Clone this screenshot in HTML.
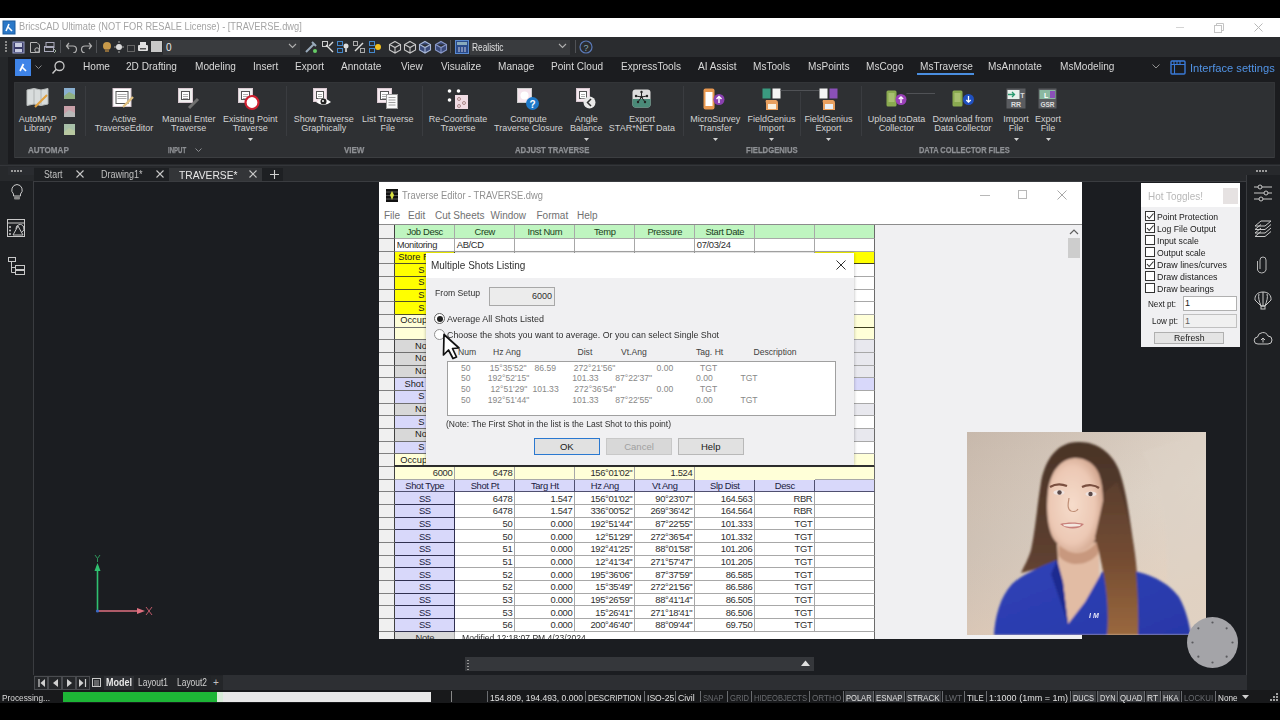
<!DOCTYPE html><html><head><meta charset="utf-8"><style>
*{margin:0;padding:0;box-sizing:border-box}
html,body{width:1280px;height:720px;overflow:hidden;background:#000;font-family:"Liberation Sans",sans-serif}
.t{position:absolute;white-space:nowrap;line-height:1}
.a{position:absolute}
</style></head><body>
<div class="a" style="left:0px;top:0px;width:1280px;height:18px;background:#000"></div>
<div class="a" style="left:0px;top:18px;width:1280px;height:19px;background:#fff"></div>
<svg class="a" style="left:2px;top:20px;" width="14" height="15" viewBox="0 0 14 15"><rect x="0.5" y="0.5" width="13" height="14" fill="#1d5d9e"/><rect x="1.5" y="1.5" width="11" height="12" fill="#2a78c8"/><path d="M4,11 L7,4 M6,7 L10,11" stroke="#fff" stroke-width="1.6" fill="none"/></svg>
<div class="t" style="left:18.5px;top:21.5px;font-size:10.4px;transform:scaleX(0.8914);transform-origin:0 0;color:#a4a4a4">BricsCAD Ultimate (NOT FOR RESALE License) - [TRAVERSE.dwg]</div>
<div class="a" style="left:1176px;top:26.5px;width:8px;height:1px;background:#d4d4d4"></div>
<svg class="a" style="left:1214px;top:23px;" width="11" height="10" viewBox="0 0 11 10"><rect x="0.5" y="2.5" width="7" height="7" fill="none" stroke="#c4c4c4"/><path d="M2.5,2.5 V0.5 H9.5 V7.5 H7.5" fill="none" stroke="#c4c4c4"/></svg>
<svg class="a" style="left:1254px;top:22.5px;" width="9" height="9" viewBox="0 0 9 9"><path d="M0.5,0.5 L8.5,8.5 M8.5,0.5 L0.5,8.5" stroke="#b8b8b8" stroke-width="1"/></svg>
<div class="a" style="left:0px;top:37px;width:1280px;height:20px;background:#2a2c2f"></div>
<div class="a" style="left:5px;top:41px;width:2px;height:2px;background:#8a8a8a"></div>
<div class="a" style="left:5px;top:44px;width:2px;height:2px;background:#8a8a8a"></div>
<div class="a" style="left:5px;top:47px;width:2px;height:2px;background:#8a8a8a"></div>
<div class="a" style="left:5px;top:50px;width:2px;height:2px;background:#8a8a8a"></div>
<svg class="a" style="left:12px;top:41px;" width="13" height="13" viewBox="0 0 13 13"><rect x="1" y="1" width="11" height="11" fill="#3a3c6a" stroke="#9aa0c8" stroke-width="1"/><rect x="3" y="2" width="7" height="4" fill="#c8cce0"/><rect x="3" y="8" width="7" height="3" fill="#c8cce0"/></svg>
<svg class="a" style="left:29px;top:41px;" width="13" height="13" viewBox="0 0 13 13"><path d="M1.5,1.5 H8 L10.5,4 V11.5 H1.5Z" fill="none" stroke="#b8b8b8" stroke-width="1"/><circle cx="8" cy="9" r="2.2" fill="none" stroke="#b8b8b8"/></svg>
<svg class="a" style="left:43px;top:41px;" width="14" height="13" viewBox="0 0 14 13"><rect x="3" y="1.5" width="8" height="5" fill="none" stroke="#aab" stroke-width="1"/><rect x="1.5" y="5.5" width="9" height="5" fill="none" stroke="#aab"/><path d="M11,8 L13,10 L11,12" stroke="#9a9" fill="none"/></svg>
<div class="a" style="left:60px;top:40px;width:1px;height:13px;background:#505256"></div>
<svg class="a" style="left:65px;top:41px;" width="13" height="12" viewBox="0 0 13 12"><path d="M4,2 L1.5,5 L4,8 M1.5,5 H8 A3.5,3.5 0 0 1 8,12" fill="none" stroke="#b0b0b0" stroke-width="1.2"/></svg>
<svg class="a" style="left:80px;top:41px;" width="13" height="12" viewBox="0 0 13 12"><path d="M9,2 L11.5,5 L9,8 M11.5,5 H5 A3.5,3.5 0 0 0 5,12" fill="none" stroke="#b0b0b0" stroke-width="1.2"/></svg>
<div class="a" style="left:96px;top:40px;width:1px;height:13px;background:#505256"></div>
<svg class="a" style="left:102px;top:40px;" width="10" height="14" viewBox="0 0 10 14"><circle cx="5" cy="6" r="4" fill="#c89a4a"/><rect x="3" y="9" width="4" height="3" fill="#8a6a3a"/></svg>
<svg class="a" style="left:114px;top:40px;" width="10" height="14" viewBox="0 0 10 14"><circle cx="5" cy="7" r="3" fill="#ddd"/><path d="M5,1 V3 M5,11 V13 M0,7 H2 M8,7 H10" stroke="#aaa"/></svg>
<svg class="a" style="left:127px;top:42px;" width="8" height="10" viewBox="0 0 8 10"><rect x="0.5" y="3.5" width="7" height="6" fill="none" stroke="#666"/></svg>
<svg class="a" style="left:137px;top:41px;" width="12" height="12" viewBox="0 0 12 12"><rect x="1" y="4" width="10" height="6" rx="1" fill="#e0e0e0"/><rect x="3" y="1" width="6" height="3" fill="#e0e0e0"/><rect x="3" y="7" width="6" height="1.5" fill="#555"/></svg>
<div class="a" style="left:151.3px;top:41.3px;width:10.7px;height:10.7px;background:#c8c8c8"></div>
<div class="a" style="left:163px;top:39.5px;width:137px;height:15px;background:#393b3e"></div>
<div class="t" style="left:166px;top:42.8px;font-size:10px;color:#e8e8e8">0</div>
<svg class="a" style="left:288px;top:43px;" width="9" height="6" viewBox="0 0 9 6"><path d="M1,1 L4.5,4.5 L8,1" fill="none" stroke="#b0b0b0" stroke-width="1.1"/></svg>
<svg class="a" style="left:304px;top:40px;" width="14" height="14" viewBox="0 0 14 14"><path d="M2,12 L10,4 M8,2 L12,6" stroke="#9ab" stroke-width="2"/><circle cx="11" cy="11" r="2" fill="#6c6"/></svg>
<svg class="a" style="left:321px;top:40px;" width="14" height="14" viewBox="0 0 14 14"><rect x="1.5" y="1.5" width="5" height="5" fill="none" stroke="#ccc"/><path d="M5,5 L12,12 M8,6 L12,2" stroke="#ddd" stroke-width="1.4"/></svg>
<svg class="a" style="left:336px;top:40px;" width="14" height="14" viewBox="0 0 14 14"><rect x="1.5" y="1.5" width="5" height="4" fill="none" stroke="#48c"/><rect x="1.5" y="8.5" width="5" height="4" fill="none" stroke="#48c"/><circle cx="10" cy="6" r="2.5" fill="#ddd"/><rect x="9" y="8" width="2" height="4" fill="#bbb"/></svg>
<svg class="a" style="left:352px;top:40px;" width="14" height="14" viewBox="0 0 14 14"><rect x="1.5" y="1.5" width="4" height="4" fill="none" stroke="#aaa"/><rect x="8.5" y="8.5" width="4" height="4" fill="none" stroke="#aaa"/><path d="M3,11 L11,3" stroke="#ddd" stroke-width="1.4"/></svg>
<svg class="a" style="left:368px;top:40px;" width="14" height="14" viewBox="0 0 14 14"><rect x="1.5" y="1.5" width="5" height="4" fill="none" stroke="#48c"/><rect x="1.5" y="8.5" width="5" height="4" fill="none" stroke="#48c"/><circle cx="10" cy="7" r="3" fill="#f0c020"/></svg>
<svg class="a" style="left:388px;top:40px;" width="14" height="14" viewBox="0 0 14 14"><path d="M7,1.5 L12.5,4.5 V10 L7,13 L1.5,10 V4.5Z M1.5,4.5 L7,7.5 L12.5,4.5 M7,7.5 V13" fill="none" stroke="#c8c8c8" stroke-width="1.1"/></svg>
<svg class="a" style="left:403px;top:40px;" width="14" height="14" viewBox="0 0 14 14"><path d="M7,1.5 L12.5,4.5 V10 L7,13 L1.5,10 V4.5Z M1.5,4.5 L7,7.5 L12.5,4.5 M7,7.5 V13" fill="none" stroke="#c8c8c8" stroke-width="1.1"/></svg>
<svg class="a" style="left:418px;top:40px;" width="14" height="14" viewBox="0 0 14 14"><path d="M7,1.5 L12.5,4.5 V10 L7,13 L1.5,10 V4.5Z M1.5,4.5 L7,7.5 L12.5,4.5 M7,7.5 V13" fill="#3a4a7a" stroke="#a8b8d8" stroke-width="1.1"/></svg>
<svg class="a" style="left:434px;top:40px;" width="14" height="14" viewBox="0 0 14 14"><path d="M7,1.5 L12.5,4.5 V10 L7,13 L1.5,10 V4.5Z M1.5,4.5 L7,7.5 L12.5,4.5 M7,7.5 V13" fill="#3a4a7a" stroke="#8898c8" stroke-width="1.1"/></svg>
<div class="a" style="left:450px;top:40px;width:1px;height:13px;background:#505256"></div>
<svg class="a" style="left:455px;top:40px;" width="14" height="14" viewBox="0 0 14 14"><rect x="0.5" y="0.5" width="13" height="13" fill="#2a4a8a" stroke="#5a8ad0"/><rect x="2" y="2" width="10" height="3" fill="#8ab"/><path d="M4,7 V12 M7,7 V12 M10,7 V12" stroke="#ccd"/></svg>
<div class="a" style="left:470px;top:39.5px;width:100px;height:15px;background:#393b3e"></div>
<div class="t" style="left:471.5px;top:41.5px;font-size:10.5px;transform:scaleX(0.7939);transform-origin:0 0;color:#e0e0e0">Realistic</div>
<svg class="a" style="left:558px;top:43px;" width="9" height="6" viewBox="0 0 9 6"><path d="M1,1 L4.5,4.5 L8,1" fill="none" stroke="#b0b0b0" stroke-width="1.1"/></svg>
<div class="a" style="left:575px;top:40px;width:1px;height:13px;background:#505256"></div>
<svg class="a" style="left:579px;top:40px;" width="14" height="14" viewBox="0 0 14 14"><circle cx="7" cy="7" r="6" fill="none" stroke="#5a7ab8" stroke-width="1.2"/><text x="7" y="10.5" font-size="9" text-anchor="middle" fill="#8ab" font-family="Liberation Sans">?</text></svg>
<div class="a" style="left:0px;top:57px;width:1280px;height:107px;background:#25272a"></div>
<div class="a" style="left:8px;top:57px;width:1272px;height:108px;background:#1b1c1f"></div>
<div class="t" style="left:82.5px;top:61.2px;font-size:10.5px;transform:scaleX(0.9600);transform-origin:0 0;color:#d8d8d8">Home</div>
<div class="t" style="left:126px;top:61.2px;font-size:10.5px;transform:scaleX(0.9600);transform-origin:0 0;color:#d8d8d8">2D Drafting</div>
<div class="t" style="left:195px;top:61.2px;font-size:10.5px;transform:scaleX(0.9600);transform-origin:0 0;color:#d8d8d8">Modeling</div>
<div class="t" style="left:253px;top:61.2px;font-size:10.5px;transform:scaleX(0.9600);transform-origin:0 0;color:#d8d8d8">Insert</div>
<div class="t" style="left:295px;top:61.2px;font-size:10.5px;transform:scaleX(0.9600);transform-origin:0 0;color:#d8d8d8">Export</div>
<div class="t" style="left:340.75px;top:61.2px;font-size:10.5px;transform:scaleX(0.9600);transform-origin:0 0;color:#d8d8d8">Annotate</div>
<div class="t" style="left:400.75px;top:61.2px;font-size:10.5px;transform:scaleX(0.9600);transform-origin:0 0;color:#d8d8d8">View</div>
<div class="t" style="left:440.75px;top:61.2px;font-size:10.5px;transform:scaleX(0.9600);transform-origin:0 0;color:#d8d8d8">Visualize</div>
<div class="t" style="left:498.25px;top:61.2px;font-size:10.5px;transform:scaleX(0.9600);transform-origin:0 0;color:#d8d8d8">Manage</div>
<div class="t" style="left:551.25px;top:61.2px;font-size:10.5px;transform:scaleX(0.9600);transform-origin:0 0;color:#d8d8d8">Point Cloud</div>
<div class="t" style="left:620.75px;top:61.2px;font-size:10.5px;transform:scaleX(0.9600);transform-origin:0 0;color:#d8d8d8">ExpressTools</div>
<div class="t" style="left:697.5px;top:61.2px;font-size:10.5px;transform:scaleX(0.9600);transform-origin:0 0;color:#d8d8d8">AI Assist</div>
<div class="t" style="left:753.25px;top:61.2px;font-size:10.5px;transform:scaleX(0.9600);transform-origin:0 0;color:#d8d8d8">MsTools</div>
<div class="t" style="left:808.25px;top:61.2px;font-size:10.5px;transform:scaleX(0.9600);transform-origin:0 0;color:#d8d8d8">MsPoints</div>
<div class="t" style="left:866.25px;top:61.2px;font-size:10.5px;transform:scaleX(0.9600);transform-origin:0 0;color:#d8d8d8">MsCogo</div>
<div class="t" style="left:920.2px;top:61.2px;font-size:10.5px;transform:scaleX(0.9600);transform-origin:0 0;color:#d8d8d8">MsTraverse</div>
<div class="t" style="left:988.2px;top:61.2px;font-size:10.5px;transform:scaleX(0.9600);transform-origin:0 0;color:#d8d8d8">MsAnnotate</div>
<div class="t" style="left:1059.7px;top:61.2px;font-size:10.5px;transform:scaleX(0.9600);transform-origin:0 0;color:#d8d8d8">MsModeling</div>
<div class="a" style="left:917px;top:73px;width:57px;height:2px;background:#4a8ee0"></div>
<div class="a" style="left:15px;top:59px;width:16px;height:17px;background:#3f84e8"></div>
<svg class="a" style="left:15px;top:59px;" width="16" height="17" viewBox="0 0 16 17"><path d="M5,12 L8.5,5 M7.5,8.5 L11,12" stroke="#fff" stroke-width="1.7" fill="none"/></svg>
<svg class="a" style="left:35px;top:65px;" width="7" height="5" viewBox="0 0 7 5"><path d="M0.5,0.5 L3.5,3.5 L6.5,0.5" fill="none" stroke="#888" stroke-width="1"/></svg>
<svg class="a" style="left:51px;top:60px;" width="14" height="16" viewBox="0 0 14 16"><circle cx="8.5" cy="6" r="4.5" fill="none" stroke="#c8c8c8" stroke-width="1.3"/><path d="M5.3,9.2 L1.5,13.5" stroke="#c8c8c8" stroke-width="1.4"/></svg>
<svg class="a" style="left:1152px;top:64px;" width="8" height="5" viewBox="0 0 8 5"><path d="M0.5,0.5 L4,4 L7.5,0.5" fill="none" stroke="#909090" stroke-width="1"/></svg>
<svg class="a" style="left:1170px;top:60px;" width="16" height="15" viewBox="0 0 16 15"><rect x="1" y="1" width="14" height="13" rx="1" fill="none" stroke="#3a7ad8" stroke-width="1.4"/><path d="M1,4.5 H15 M4.5,4.5 V14 M4,1 V4.5 M7,1 V4.5 M10,1 V4.5" stroke="#3a7ad8" stroke-width="1.1"/></svg>
<div class="t" style="left:1189.7px;top:62.5px;font-size:11px;transform:scaleX(1.0111);transform-origin:0 0;color:#5294e6">Interface settings</div>
<div class="a" style="left:14px;top:82px;width:1261px;height:76px;background:#2e3033;border:1px solid #333538;border-bottom:1.5px solid #3c3e41;border-radius:1px"></div>
<div class="a" style="left:85px;top:86px;width:1px;height:50px;background:#3a3c40"></div>
<div class="a" style="left:286px;top:86px;width:1px;height:50px;background:#3a3c40"></div>
<div class="a" style="left:421.5px;top:86px;width:1px;height:50px;background:#3a3c40"></div>
<div class="a" style="left:682.5px;top:86px;width:1px;height:50px;background:#3a3c40"></div>
<div class="a" style="left:860.5px;top:86px;width:1px;height:50px;background:#3a3c40"></div>
<div class="a" style="left:800px;top:92px;width:1px;height:44px;background:#3a3c40"></div>
<div class="t" style="left:-22.200000000000003px;top:115.2px;width:120px;text-align:center;font-size:9px;color:#d2d2d2">AutoMAP</div>
<div class="t" style="left:-22.200000000000003px;top:123.6px;width:120px;text-align:center;font-size:9px;color:#d2d2d2">Library</div>
<div class="t" style="left:64px;top:115.2px;width:120px;text-align:center;font-size:9px;color:#d2d2d2">Active</div>
<div class="t" style="left:64px;top:123.6px;width:120px;text-align:center;font-size:9px;color:#d2d2d2">TraverseEditor</div>
<div class="t" style="left:128.7px;top:115.2px;width:120px;text-align:center;font-size:9px;color:#d2d2d2">Manual Enter</div>
<div class="t" style="left:128.7px;top:123.6px;width:120px;text-align:center;font-size:9px;color:#d2d2d2">Traverse</div>
<div class="t" style="left:190.3px;top:115.2px;width:120px;text-align:center;font-size:9px;color:#d2d2d2">Existing Point</div>
<div class="t" style="left:190.3px;top:123.6px;width:120px;text-align:center;font-size:9px;color:#d2d2d2">Traverse</div>
<svg class="a" style="left:247.8px;top:137.5px;" width="5" height="3" viewBox="0 0 5 3"><path d="M0,0 H5 L2.5,3Z" fill="#d0d0d0"/></svg>
<div class="t" style="left:263.75px;top:115.2px;width:120px;text-align:center;font-size:9px;color:#d2d2d2">Show Traverse</div>
<div class="t" style="left:263.75px;top:123.6px;width:120px;text-align:center;font-size:9px;color:#d2d2d2">Graphically</div>
<div class="t" style="left:327.8px;top:115.2px;width:120px;text-align:center;font-size:9px;color:#d2d2d2">List Traverse</div>
<div class="t" style="left:327.8px;top:123.6px;width:120px;text-align:center;font-size:9px;color:#d2d2d2">File</div>
<div class="t" style="left:398px;top:115.2px;width:120px;text-align:center;font-size:9px;color:#d2d2d2">Re-Coordinate</div>
<div class="t" style="left:398px;top:123.6px;width:120px;text-align:center;font-size:9px;color:#d2d2d2">Traverse</div>
<div class="t" style="left:468.4px;top:115.2px;width:120px;text-align:center;font-size:9px;color:#d2d2d2">Compute</div>
<div class="t" style="left:468.4px;top:123.6px;width:120px;text-align:center;font-size:9px;color:#d2d2d2">Traverse Closure</div>
<div class="t" style="left:526.25px;top:115.2px;width:120px;text-align:center;font-size:9px;color:#d2d2d2">Angle</div>
<div class="t" style="left:526.25px;top:123.6px;width:120px;text-align:center;font-size:9px;color:#d2d2d2">Balance</div>
<svg class="a" style="left:583.75px;top:137.5px;" width="5" height="3" viewBox="0 0 5 3"><path d="M0,0 H5 L2.5,3Z" fill="#d0d0d0"/></svg>
<div class="t" style="left:581.9px;top:115.2px;width:120px;text-align:center;font-size:9px;color:#d2d2d2">Export</div>
<div class="t" style="left:581.9px;top:123.6px;width:120px;text-align:center;font-size:9px;color:#d2d2d2">STAR*NET Data</div>
<div class="t" style="left:655.3px;top:115.2px;width:120px;text-align:center;font-size:9px;color:#d2d2d2">MicroSurvey</div>
<div class="t" style="left:655.3px;top:123.6px;width:120px;text-align:center;font-size:9px;color:#d2d2d2">Transfer</div>
<svg class="a" style="left:712.8px;top:137.5px;" width="5" height="3" viewBox="0 0 5 3"><path d="M0,0 H5 L2.5,3Z" fill="#d0d0d0"/></svg>
<div class="t" style="left:711.6px;top:115.2px;width:120px;text-align:center;font-size:9px;color:#d2d2d2">FieldGenius</div>
<div class="t" style="left:711.6px;top:123.6px;width:120px;text-align:center;font-size:9px;color:#d2d2d2">Import</div>
<svg class="a" style="left:769.1px;top:137.5px;" width="5" height="3" viewBox="0 0 5 3"><path d="M0,0 H5 L2.5,3Z" fill="#d0d0d0"/></svg>
<div class="t" style="left:768.4px;top:115.2px;width:120px;text-align:center;font-size:9px;color:#d2d2d2">FieldGenius</div>
<div class="t" style="left:768.4px;top:123.6px;width:120px;text-align:center;font-size:9px;color:#d2d2d2">Export</div>
<svg class="a" style="left:825.9px;top:137.5px;" width="5" height="3" viewBox="0 0 5 3"><path d="M0,0 H5 L2.5,3Z" fill="#d0d0d0"/></svg>
<div class="t" style="left:836.6px;top:115.2px;width:120px;text-align:center;font-size:9px;color:#d2d2d2">Upload toData</div>
<div class="t" style="left:836.6px;top:123.6px;width:120px;text-align:center;font-size:9px;color:#d2d2d2">Collector</div>
<div class="t" style="left:902.8px;top:115.2px;width:120px;text-align:center;font-size:9px;color:#d2d2d2">Download from</div>
<div class="t" style="left:902.8px;top:123.6px;width:120px;text-align:center;font-size:9px;color:#d2d2d2">Data Collector</div>
<div class="t" style="left:956px;top:115.2px;width:120px;text-align:center;font-size:9px;color:#d2d2d2">Import</div>
<div class="t" style="left:956px;top:123.6px;width:120px;text-align:center;font-size:9px;color:#d2d2d2">File</div>
<svg class="a" style="left:1013.5px;top:137.5px;" width="5" height="3" viewBox="0 0 5 3"><path d="M0,0 H5 L2.5,3Z" fill="#d0d0d0"/></svg>
<div class="t" style="left:988px;top:115.2px;width:120px;text-align:center;font-size:9px;color:#d2d2d2">Export</div>
<div class="t" style="left:988px;top:123.6px;width:120px;text-align:center;font-size:9px;color:#d2d2d2">File</div>
<svg class="a" style="left:1045.5px;top:137.5px;" width="5" height="3" viewBox="0 0 5 3"><path d="M0,0 H5 L2.5,3Z" fill="#d0d0d0"/></svg>
<div class="t" style="left:28.3px;top:145.6px;font-size:8.8px;font-weight:bold;transform:scaleX(0.9204);transform-origin:0 0;color:#8e9094;-webkit-text-stroke:0.25px #8e9094">AUTOMAP</div>
<div class="t" style="left:167.6px;top:145.6px;font-size:8.8px;font-weight:bold;transform:scaleX(0.6894);transform-origin:0 0;color:#8e9094;-webkit-text-stroke:0.25px #8e9094">INPUT</div>
<svg class="a" style="left:195px;top:148px;" width="7" height="5" viewBox="0 0 7 5"><path d="M0.5,0.5 L3.5,3.5 L6.5,0.5" fill="none" stroke="#8a8c90" stroke-width="1"/></svg>
<div class="t" style="left:344px;top:145.6px;font-size:8.8px;font-weight:bold;transform:scaleX(0.9071);transform-origin:0 0;color:#8e9094;-webkit-text-stroke:0.25px #8e9094">VIEW</div>
<div class="t" style="left:515px;top:145.6px;font-size:8.8px;font-weight:bold;transform:scaleX(0.8761);transform-origin:0 0;color:#8e9094;-webkit-text-stroke:0.25px #8e9094">ADJUST TRAVERSE</div>
<div class="t" style="left:745.6px;top:145.6px;font-size:8.8px;font-weight:bold;transform:scaleX(0.8722);transform-origin:0 0;color:#8e9094;-webkit-text-stroke:0.25px #8e9094">FIELDGENIUS</div>
<div class="t" style="left:919px;top:145.6px;font-size:8.8px;font-weight:bold;transform:scaleX(0.8459);transform-origin:0 0;color:#8e9094;-webkit-text-stroke:0.25px #8e9094">DATA COLLECTOR FILES</div>
<svg class="a" style="left:26px;top:88px;" width="24" height="20" viewBox="0 0 24 20"><path d="M1,2 L8,0.5 L15,2 L22,0.5 V16 L15,17.5 L8,16 L1,17.5Z" fill="#d8dcdc" stroke="#b8bcbc"/><path d="M8,0.5 V16 M15,2 V17.5" stroke="#b0b4b4"/><path d="M9,19 L21,7" stroke="#e0a040" stroke-width="2.2"/></svg>
<svg class="a" style="left:64px;top:88px;" width="12" height="12" viewBox="0 0 12 12"><rect width="11" height="11" fill="#8ab0d0"/><path d="M0,8 L5,4 L11,7 V11 H0Z" fill="#90b080"/></svg>
<svg class="a" style="left:64px;top:106px;" width="12" height="12" viewBox="0 0 12 12"><rect width="11" height="11" fill="#c8a0a8"/><path d="M0,8 L5,4 L11,7 V11 H0Z" fill="#b8b8b8"/></svg>
<svg class="a" style="left:64px;top:124px;" width="12" height="12" viewBox="0 0 12 12"><rect width="11" height="11" fill="#a8c0a8"/><path d="M0,8 L5,4 L11,7 V11 H0Z" fill="#b8c8a0"/></svg>
<svg class="a" style="left:112px;top:88px;" width="24" height="21" viewBox="0 0 24 21"><rect x="1.0" y="0.5" width="18" height="18" fill="#fff" stroke="#d8c8d0"/><rect x="4.0" y="3.5" width="12" height="12" fill="#fff" stroke="#555" stroke-width="1"/><path d="M5.5,6.5 H14.5 M5.5,8.5 H14.5 M5.5,10.5 H14.5" stroke="#999" stroke-width="0.8"/><path d="M11,19 L21,9" stroke="#e0c080" stroke-width="2.4"/></svg>
<svg class="a" style="left:177px;top:88px;" width="24" height="22" viewBox="0 0 24 22"><rect x="1.5" y="0.5" width="14" height="14" fill="#eee" stroke="#d8c8d0"/><rect x="4.5" y="3.5" width="8" height="8" fill="#fff" stroke="#555" stroke-width="1"/><path d="M6,6.5 H11 M6,8.5 H11 M6,10.5 H11" stroke="#999" stroke-width="0.8"/><path d="M12,20 L21,11" stroke="#707070" stroke-width="3"/></svg>
<svg class="a" style="left:237px;top:88px;" width="24" height="23" viewBox="0 0 24 23"><rect x="1.5" y="0.5" width="14" height="14" fill="#eee" stroke="#d8c8d0"/><rect x="4.5" y="3.5" width="8" height="8" fill="#fff" stroke="#555" stroke-width="1"/><path d="M6,6.5 H11 M6,8.5 H11 M6,10.5 H11" stroke="#999" stroke-width="0.8"/><circle cx="15" cy="14.5" r="6.5" fill="#fff" stroke="#d02030" stroke-width="2.2"/></svg>
<svg class="a" style="left:312px;top:88px;" width="21" height="17" viewBox="0 0 21 17"><rect x="1.5" y="0.5" width="13" height="13" fill="#f4e8ee" stroke="#d8c8d0"/><rect x="4.5" y="3.5" width="7" height="7" fill="#fff" stroke="#555" stroke-width="1"/><path d="M6,6.5 H10 M6,8.5 H10 M6,10.5 H10" stroke="#999" stroke-width="0.8"/><path d="M4,14 Q11.5,7 19,14 Q11.5,20 4,14Z" fill="#fff"/><circle cx="11.5" cy="13.5" r="3" fill="#222"/><circle cx="11" cy="13" r="1" fill="#fff"/></svg>
<svg class="a" style="left:376px;top:88px;" width="24" height="22" viewBox="0 0 24 22"><rect x="1.5" y="0.5" width="14" height="14" fill="#f4e8ee" stroke="#d8c8d0"/><rect x="4.5" y="3.5" width="8" height="8" fill="#fff" stroke="#555" stroke-width="1"/><path d="M6,6.5 H11 M6,8.5 H11 M6,10.5 H11" stroke="#999" stroke-width="0.8"/><rect x="10.5" y="6.5" width="11" height="14" fill="#fafafa" stroke="#999"/><path d="M12.5,9.5 H19.5 M12.5,12 H19.5 M12.5,14.5 H19.5 M12.5,17 H19.5" stroke="#888" stroke-width="0.8"/></svg>
<svg class="a" style="left:447px;top:89px;" width="23" height="21" viewBox="0 0 23 21"><circle cx="2.5" cy="2" r="1.8" fill="#fff"/><circle cx="11.5" cy="2" r="1.8" fill="#fff"/><circle cx="2.5" cy="11" r="1.8" fill="#fff"/><rect x="8" y="6" width="13" height="14" fill="#f0dce4"/><circle cx="12" cy="10" r="1.5" fill="none" stroke="#a88"/><circle cx="17" cy="14" r="1.5" fill="none" stroke="#a88"/><circle cx="12" cy="17" r="1.5" fill="none" stroke="#a88"/></svg>
<svg class="a" style="left:517px;top:88px;" width="24" height="24" viewBox="0 0 24 24"><rect x="0.5" y="0.5" width="14" height="14" fill="#f4e4ec" stroke="#ccc"/><circle cx="7.5" cy="7.5" r="4" fill="#fff"/><circle cx="15.5" cy="15.5" r="6.5" fill="#1e78c8"/><text x="15.5" y="19.5" font-size="10" font-weight="bold" text-anchor="middle" fill="#fff" font-family="Liberation Sans">?</text></svg>
<svg class="a" style="left:575px;top:88px;" width="22" height="22" viewBox="0 0 22 22"><rect x="1.5" y="0.5" width="13" height="13" fill="#f4e8ee" stroke="#d8c8d0"/><rect x="4.5" y="3.5" width="7" height="7" fill="#fff" stroke="#555" stroke-width="1"/><path d="M6,6.5 H10 M6,8.5 H10 M6,10.5 H10" stroke="#999" stroke-width="0.8"/><circle cx="14.5" cy="14.5" r="6" fill="#e8e8e8"/><path d="M16,11 L12.5,14.5 L16,18" fill="none" stroke="#333" stroke-width="1.5"/></svg>
<svg class="a" style="left:632px;top:89px;" width="19" height="19" viewBox="0 0 19 19"><rect x="0.5" y="0.5" width="18" height="18" rx="3" fill="#dcdcdc"/><path d="M0.5,10 H18.5 V15.5 A3,3 0 0 1 15.5,18.5 H3.5 A3,3 0 0 1 0.5,15.5Z" fill="#4a8a78"/><path d="M9.5,8 L9.5,3 M9.5,8 L4,7 M9.5,8 L15,7 M9.5,8 L6,13 M9.5,8 L13,13" stroke="#222" stroke-width="1"/><circle cx="9.5" cy="8" r="1.3" fill="#222"/><circle cx="9.5" cy="3" r="1.2" fill="#222"/><circle cx="4" cy="7" r="1.2" fill="#222"/><circle cx="15" cy="7" r="1.2" fill="#222"/><circle cx="6" cy="13" r="1.2" fill="#222"/><circle cx="13" cy="13" r="1.2" fill="#222"/></svg>
<svg class="a" style="left:703px;top:88px;" width="23" height="23" viewBox="0 0 23 23"><rect x="0.5" y="0.5" width="11" height="21" rx="2" fill="#e89850"/><rect x="2.5" y="4" width="7" height="14" fill="#fff"/><circle cx="16" cy="11.5" r="5.5" fill="#8a40b0"/><path d="M16,15 V8.5 M13.5,11 L16,8.5 L18.5,11" stroke="#fff" stroke-width="1.4" fill="none"/></svg>
<svg class="a" style="left:762px;top:88px;" width="58" height="24" viewBox="0 0 58 24"><rect x="0.5" y="0.5" width="8" height="10" fill="#3a9a80"/><rect x="10.5" y="0.5" width="8" height="10" fill="#f4f4f4"/><path d="M18.5,2.5 H57" stroke="#505256"/><path d="M4,12 H14 A3,3 0 0 1 16,15 V22 H4 V15 A3,3 0 0 1 4,12Z" fill="#e8a060"/><rect x="6" y="16" width="8" height="5" fill="#f8f0e0"/></svg>
<svg class="a" style="left:819px;top:88px;" width="20" height="24" viewBox="0 0 20 24"><rect x="0.5" y="0.5" width="8" height="10" fill="#f4f4f4"/><rect x="10.5" y="0.5" width="8" height="10" fill="#8a50b8"/><path d="M4,12 H14 A3,3 0 0 1 16,15 V22 H4 V15 A3,3 0 0 1 4,12Z" fill="#e8a060"/><rect x="6" y="16" width="8" height="5" fill="#e8f0f8"/></svg>
<svg class="a" style="left:886px;top:90px;" width="50" height="18" viewBox="0 0 50 18"><rect x="0.5" y="0.5" width="10" height="16" rx="1.5" fill="#8aaa50"/><rect x="2.5" y="3" width="6" height="9" fill="#a8c070"/><circle cx="15" cy="9.5" r="5.5" fill="#9a40b8"/><path d="M15,13 V7 M12.8,9 L15,6.8 L17.2,9" stroke="#fff" stroke-width="1.3" fill="none"/><path d="M20.5,3.5 H49" stroke="#505256"/></svg>
<svg class="a" style="left:952px;top:90px;" width="24" height="18" viewBox="0 0 24 18"><rect x="0.5" y="0.5" width="10" height="16" rx="1.5" fill="#8aaa50"/><rect x="2.5" y="3" width="6" height="9" fill="#a8c070"/><circle cx="16.5" cy="9.5" r="5.5" fill="#2050c0"/><path d="M16.5,6 V12 M14.3,10 L16.5,12.2 L18.7,10" stroke="#fff" stroke-width="1.3" fill="none"/></svg>
<svg class="a" style="left:1006px;top:88px;" width="20" height="21" viewBox="0 0 20 21"><rect x="0.5" y="0.5" width="19" height="20" fill="#5a5c60"/><rect x="1.5" y="2" width="12" height="9" fill="#e8f0ec"/><path d="M2,6.5 H8 M6,4 L8.5,6.5 L6,9" stroke="#2a9a70" stroke-width="1.3" fill="none"/><text x="16.5" y="10" font-size="7" font-weight="bold" text-anchor="middle" fill="#ddd" font-family="Liberation Sans">T</text><text x="10" y="19" font-size="7" font-weight="bold" text-anchor="middle" fill="#ddd" font-family="Liberation Sans">RR</text></svg>
<svg class="a" style="left:1038px;top:88px;" width="19" height="21" viewBox="0 0 19 21"><rect x="0.5" y="0.5" width="18" height="20" fill="#5a5c60"/><rect x="1.5" y="2" width="16" height="9" fill="#8ab8a0"/><text x="6" y="9.5" font-size="7" font-weight="bold" fill="#fff" font-family="Liberation Sans">L</text><rect x="12" y="3" width="5" height="7" fill="#8a50b8"/><text x="9.5" y="19" font-size="6.5" font-weight="bold" text-anchor="middle" fill="#ddd" font-family="Liberation Sans">GSR</text></svg>
<div class="a" style="left:0px;top:164px;width:1280px;height:17px;background:#27292c"></div>
<div class="a" style="left:0px;top:165px;width:1280px;height:1px;background:#34363a"></div>
<div class="a" style="left:8px;top:167px;width:26px;height:8px;background:#2a2c30"></div>
<div class="a" style="left:11px;top:170px;width:2px;height:2px;background:#9a9a9a"></div>
<div class="a" style="left:14px;top:170px;width:2px;height:2px;background:#9a9a9a"></div>
<div class="a" style="left:17px;top:170px;width:2px;height:2px;background:#9a9a9a"></div>
<div class="a" style="left:20px;top:170px;width:2px;height:2px;background:#9a9a9a"></div>
<div class="a" style="left:34px;top:168px;width:135px;height:13px;background:#1e2023"></div>
<div class="a" style="left:169px;top:168px;width:93px;height:13px;background:#333538"></div>
<div class="a" style="left:262px;top:168px;width:21px;height:13px;background:#1e2023"></div>
<div class="t" style="left:43.7px;top:169.5px;font-size:10px;transform:scaleX(0.8760);transform-origin:0 0;color:#c0c0c0">Start</div>
<div class="t" style="left:100.7px;top:169.5px;font-size:10px;transform:scaleX(0.8995);transform-origin:0 0;color:#c0c0c0">Drawing1*</div>
<div class="t" style="left:178.7px;top:169.5px;font-size:10.5px;transform:scaleX(0.9765);transform-origin:0 0;color:#e8e8e8">TRAVERSE*</div>
<svg class="a" style="left:76px;top:170px;" width="8" height="8" viewBox="0 0 8 8"><path d="M0.5,0.5 L7.5,7.5 M7.5,0.5 L0.5,7.5" stroke="#c8c8c8" stroke-width="1.1"/></svg>
<svg class="a" style="left:156px;top:170px;" width="8" height="8" viewBox="0 0 8 8"><path d="M0.5,0.5 L7.5,7.5 M7.5,0.5 L0.5,7.5" stroke="#c8c8c8" stroke-width="1.1"/></svg>
<svg class="a" style="left:249px;top:170px;" width="8" height="8" viewBox="0 0 8 8"><path d="M0.5,0.5 L7.5,7.5 M7.5,0.5 L0.5,7.5" stroke="#c8c8c8" stroke-width="1.1"/></svg>
<svg class="a" style="left:270px;top:170px;" width="9" height="9" viewBox="0 0 9 9"><path d="M4.5,0 V9 M0,4.5 H9" stroke="#d0d0d0" stroke-width="1.1"/></svg>
<div class="a" style="left:0px;top:181px;width:1280px;height:494px;background:#1b1d21"></div>
<div class="a" style="left:0px;top:181px;width:33px;height:494px;background:#1e2023"></div>
<div class="a" style="left:33px;top:181px;width:1px;height:494px;background:#3a3c40"></div>
<div class="a" style="left:34px;top:181px;width:1213px;height:1px;background:#3a3c40"></div>
<div class="a" style="left:1246px;top:175px;width:34px;height:500px;background:#1e2023"></div>
<div class="a" style="left:1246px;top:175px;width:1px;height:500px;background:#3a3c40"></div>
<div class="a" style="left:1256px;top:169.5px;width:2px;height:2px;background:#9a9a9a"></div>
<div class="a" style="left:1259px;top:169.5px;width:2px;height:2px;background:#9a9a9a"></div>
<div class="a" style="left:1262px;top:169.5px;width:2px;height:2px;background:#9a9a9a"></div>
<div class="a" style="left:1265px;top:169.5px;width:2px;height:2px;background:#9a9a9a"></div>
<svg class="a" style="left:9px;top:183px;" width="16" height="18" viewBox="0 0 16 18"><path d="M8,1.5 A5.5,5.5 0 0 0 4.5,11 V13 H11.5 V11 A5.5,5.5 0 0 0 8,1.5Z" fill="none" stroke="#c8c8c8" stroke-width="1"/><rect x="5" y="13.5" width="6" height="3" rx="1" fill="#888"/></svg>
<svg class="a" style="left:7px;top:219px;" width="19" height="19" viewBox="0 0 19 19"><rect x="0.5" y="0.5" width="17" height="17" fill="none" stroke="#c8c8c8"/><path d="M0.5,4 H17.5" stroke="#c8c8c8"/><circle cx="3" cy="8" r="1" fill="#ccc"/><circle cx="3" cy="11.5" r="1" fill="#ccc"/><circle cx="3" cy="15" r="1" fill="#ccc"/><path d="M6,16 L11,7 L16,16 Z M9,10 A4,4 0 1 1 15,13" fill="none" stroke="#c8c8c8"/></svg>
<svg class="a" style="left:8px;top:257px;" width="18" height="19" viewBox="0 0 18 19"><rect x="0.5" y="0.5" width="7" height="4" fill="none" stroke="#c8c8c8"/><rect x="7.5" y="8.5" width="9" height="4" fill="none" stroke="#c8c8c8"/><rect x="7.5" y="13.5" width="9" height="4" fill="none" stroke="#c8c8c8"/><path d="M3.5,4.5 V15.5 H7.5 M3.5,10.5 H7.5" fill="none" stroke="#c8c8c8"/></svg>
<svg class="a" style="left:1253px;top:184px;" width="20" height="18" viewBox="0 0 20 18"><path d="M1,3 H19 M1,9 H19 M1,15 H19" stroke="#c8c8c8"/><circle cx="7" cy="3" r="2" fill="#1e2023" stroke="#c8c8c8"/><circle cx="13" cy="9" r="2" fill="#1e2023" stroke="#c8c8c8"/><circle cx="8" cy="15" r="2" fill="#1e2023" stroke="#c8c8c8"/></svg>
<svg class="a" style="left:1254px;top:220px;" width="18" height="18" viewBox="0 0 18 18"><path d="M1,6 L7,1 H17 L11,6Z M1,9.5 L7,4.5 M17,4.5 L11,9.5 H1 M1,13 L7,8 M17,8 L11,13 H1 M1,16.5 L7,11.5 M17,11.5 L11,16.5 H1" fill="none" stroke="#c8c8c8"/></svg>
<svg class="a" style="left:1257px;top:255px;" width="12" height="20" viewBox="0 0 12 20"><path d="M3,14 V5 A3,3 0 0 1 9,5 V15 A4.5,4.5 0 0 1 0.5,15 V6" fill="none" stroke="#b8b8b8" stroke-width="1"/></svg>
<svg class="a" style="left:1254px;top:291px;" width="18" height="20" viewBox="0 0 18 20"><path d="M9,1 C3,1 0.5,5 1,9 L7,15 H11 L17,9 C17.5,5 15,1 9,1Z M5,3 C4,6 5,10 7,15 M13,3 C14,6 13,10 11,15 M9,1 V15" fill="none" stroke="#c8c8c8"/><rect x="7" y="15" width="4" height="3" fill="none" stroke="#c8c8c8"/></svg>
<svg class="a" style="left:1253px;top:330px;" width="20" height="16" viewBox="0 0 20 16"><path d="M5,14 H15 A4,4 0 0 0 15,6 A5.5,5.5 0 0 0 4.5,7 A3.5,3.5 0 0 0 5,14Z" fill="none" stroke="#c8c8c8"/><path d="M10,12.5 V8 M8,10 L10,8 L12,10" stroke="#c8c8c8" fill="none"/></svg>
<svg class="a" style="left:88px;top:552px;" width="68" height="70" viewBox="0 0 68 70"><path d="M9.5,59 V14" stroke="#30c070" stroke-width="1.6"/><path d="M6.5,19 L9.5,11 L12.5,19Z" fill="#30c070"/><path d="M9.5,59 H54" stroke="#e07080" stroke-width="1.6"/><path d="M49,56 L57,59 L49,62Z" fill="#e07080"/><circle cx="9.5" cy="59" r="1.6" fill="#3a6ac8"/><path d="M7,3 L9.5,6.5 L12,3 M9.5,6.5 V10" stroke="#30a060" stroke-width="0.9" fill="none"/><path d="M58,55 L64,63 M64,55 L58,63" stroke="#d06070" stroke-width="0.9"/></svg>
<div class="a" style="left:465px;top:657px;width:349px;height:14px;background:#35373b"></div>
<div class="a" style="left:466.5px;top:659.5px;width:2px;height:1.5px;background:#9a9a9a"></div>
<div class="a" style="left:466.5px;top:662.5px;width:2px;height:1.5px;background:#9a9a9a"></div>
<div class="a" style="left:466.5px;top:665.5px;width:2px;height:1.5px;background:#9a9a9a"></div>
<div class="a" style="left:466.5px;top:668.5px;width:2px;height:1.5px;background:#9a9a9a"></div>
<svg class="a" style="left:801px;top:660px;" width="9" height="6" viewBox="0 0 9 6"><path d="M0,6 L4.5,0.5 L9,6Z" fill="#e0e0e0"/></svg>
<div class="a" style="left:0px;top:675px;width:34px;height:15px;background:#1e2023"></div>
<div class="a" style="left:1246px;top:675px;width:34px;height:15px;background:#1e2023"></div>
<div class="a" style="left:1246px;top:675px;width:1px;height:15px;background:#45474b"></div>
<div class="a" style="left:34px;top:675px;width:1213px;height:15px;background:#2d2f33"></div>
<div class="a" style="left:34px;top:675px;width:189px;height:15px;background:#222427"></div>
<div class="a" style="left:34px;top:676px;width:14px;height:14px;border:1px solid #4a4c50;background:#242629"></div>
<div class="a" style="left:48px;top:676px;width:14px;height:14px;border:1px solid #4a4c50;background:#242629"></div>
<div class="a" style="left:62px;top:676px;width:14px;height:14px;border:1px solid #4a4c50;background:#242629"></div>
<div class="a" style="left:76px;top:676px;width:14px;height:14px;border:1px solid #4a4c50;background:#242629"></div>
<svg class="a" style="left:38px;top:679px;" width="7" height="8" viewBox="0 0 7 8"><path d="M1,0 V8" stroke="#d0d0d0" stroke-width="1.2"/><path d="M7,0 V8 L2.5,4Z" fill="#d0d0d0"/></svg>
<svg class="a" style="left:52px;top:679px;" width="7" height="8" viewBox="0 0 7 8"><path d="M6,0 V8 L1,4Z" fill="#d0d0d0"/></svg>
<svg class="a" style="left:66px;top:679px;" width="7" height="8" viewBox="0 0 7 8"><path d="M1,0 V8 L6,4Z" fill="#d0d0d0"/></svg>
<svg class="a" style="left:79px;top:679px;" width="8" height="8" viewBox="0 0 8 8"><path d="M0,0 V8 L4.5,4Z" fill="#d0d0d0"/><path d="M6.5,0 V8" stroke="#d0d0d0" stroke-width="1.2"/></svg>
<svg class="a" style="left:91px;top:677px;" width="11" height="11" viewBox="0 0 11 11"><rect x="1.5" y="1.5" width="8" height="8" fill="none" stroke="#c8c8c8"/><path d="M3,4 H8 M3,6 H8 M3,8 H8" stroke="#c8c8c8" stroke-width="0.8"/></svg>
<div class="a" style="left:104px;top:676px;width:30px;height:14px;background:#2e3034"></div>
<div class="t" style="left:105.5px;top:678px;font-size:10px;font-weight:bold;transform:scaleX(0.9000);transform-origin:0 0;color:#e8e8e8">Model</div>
<div class="t" style="left:137.5px;top:678px;font-size:10px;transform:scaleX(0.8430);transform-origin:0 0;color:#d0d0d0">Layout1</div>
<div class="t" style="left:176.5px;top:678px;font-size:10px;transform:scaleX(0.8430);transform-origin:0 0;color:#d0d0d0">Layout2</div>
<div class="a" style="left:211px;top:676px;width:12px;height:14px;background:#242629"></div>
<div class="t" style="left:213px;top:678px;font-size:10px;color:#c0c0c0">+</div>
<div class="a" style="left:0px;top:690px;width:1280px;height:12.5px;background:#18191b"></div>
<div class="t" style="left:2px;top:692.5px;font-size:9.5px;transform:scaleX(0.8741);transform-origin:0 0;color:#d8d8d8">Processing...</div>
<div class="a" style="left:62.5px;top:691.5px;width:154.5px;height:10.5px;background:#1db536"></div>
<div class="a" style="left:217px;top:691.5px;width:6px;height:10.5px;background:#d8ecd8"></div>
<div class="a" style="left:223px;top:691.5px;width:208px;height:10.5px;background:#e8e8e8"></div>
<div class="a" style="left:451px;top:691px;width:1px;height:11px;background:#888"></div>
<div class="a" style="left:487px;top:691px;width:1px;height:11px;background:#6a6c70"></div>
<div class="t" style="left:490px;top:692.5px;font-size:9.5px;transform:scaleX(0.9028);transform-origin:0 0;color:#e0e0e0">154.809, 194.493, 0.000</div>
<div class="a" style="left:585.4px;top:691px;width:1px;height:11px;background:#6a6c70"></div>
<div class="t" style="left:588.4px;top:692.5px;font-size:9.5px;transform:scaleX(0.8210);transform-origin:0 0;color:#e0e0e0">DESCRIPTION</div>
<div class="a" style="left:643.8px;top:691px;width:1px;height:11px;background:#6a6c70"></div>
<div class="t" style="left:646.8px;top:692.5px;font-size:9.5px;transform:scaleX(0.9038);transform-origin:0 0;color:#e0e0e0">ISO-25</div>
<div class="a" style="left:675.4px;top:691px;width:1px;height:11px;background:#6a6c70"></div>
<div class="t" style="left:678.4px;top:692.5px;font-size:9.5px;transform:scaleX(0.9251);transform-origin:0 0;color:#e0e0e0">Civil</div>
<div class="a" style="left:699.5px;top:691px;width:1px;height:11px;background:#6a6c70"></div>
<div class="t" style="left:702.5px;top:692.5px;font-size:9.5px;transform:scaleX(0.7924);transform-origin:0 0;color:#6a6c70">SNAP</div>
<div class="a" style="left:727px;top:691px;width:1px;height:11px;background:#6a6c70"></div>
<div class="t" style="left:730px;top:692.5px;font-size:9.5px;transform:scaleX(0.8000);transform-origin:0 0;color:#6a6c70">GRID</div>
<div class="a" style="left:751px;top:691px;width:1px;height:11px;background:#6a6c70"></div>
<div class="t" style="left:754px;top:692.5px;font-size:9.5px;transform:scaleX(0.7969);transform-origin:0 0;color:#6a6c70">HIDEOBJECTS</div>
<div class="a" style="left:808.8px;top:691px;width:1px;height:11px;background:#6a6c70"></div>
<div class="t" style="left:811.8px;top:692.5px;font-size:9.5px;transform:scaleX(0.8555);transform-origin:0 0;color:#6a6c70">ORTHO</div>
<div class="a" style="left:844.5px;top:691px;width:28.600000000000023px;height:11px;background:#3a3c40"></div>
<div class="a" style="left:843px;top:691px;width:1px;height:11px;background:#6a6c70"></div>
<div class="t" style="left:846px;top:692.5px;font-size:9.5px;transform:scaleX(0.7949);transform-origin:0 0;color:#e0e0e0">POLAR</div>
<div class="a" style="left:874.5px;top:691px;width:29.600000000000023px;height:11px;background:#3a3c40"></div>
<div class="a" style="left:873px;top:691px;width:1px;height:11px;background:#6a6c70"></div>
<div class="t" style="left:876px;top:692.5px;font-size:9.5px;transform:scaleX(0.8259);transform-origin:0 0;color:#e0e0e0">ESNAP</div>
<div class="a" style="left:905.5px;top:691px;width:35.700000000000045px;height:11px;background:#3a3c40"></div>
<div class="a" style="left:904px;top:691px;width:1px;height:11px;background:#6a6c70"></div>
<div class="t" style="left:907px;top:692.5px;font-size:9.5px;transform:scaleX(0.8486);transform-origin:0 0;color:#e0e0e0">STRACK</div>
<div class="a" style="left:941.8px;top:691px;width:1px;height:11px;background:#6a6c70"></div>
<div class="t" style="left:944.8px;top:692.5px;font-size:9.5px;transform:scaleX(0.8890);transform-origin:0 0;color:#6a6c70">LWT</div>
<div class="a" style="left:964px;top:691px;width:1px;height:11px;background:#6a6c70"></div>
<div class="t" style="left:967px;top:692.5px;font-size:9.5px;transform:scaleX(0.8324);transform-origin:0 0;color:#e0e0e0">TILE</div>
<div class="a" style="left:985.5px;top:691px;width:1px;height:11px;background:#6a6c70"></div>
<div class="t" style="left:988.5px;top:692.5px;font-size:9.5px;transform:scaleX(0.9512);transform-origin:0 0;color:#e0e0e0">1:1000 (1mm = 1m)</div>
<div class="a" style="left:1071.5px;top:691px;width:24px;height:11px;background:#3a3c40"></div>
<div class="a" style="left:1070px;top:691px;width:1px;height:11px;background:#6a6c70"></div>
<div class="t" style="left:1073px;top:692.5px;font-size:9.5px;transform:scaleX(0.7801);transform-origin:0 0;color:#e0e0e0">DUCS</div>
<div class="a" style="left:1098.0px;top:691px;width:18.5px;height:11px;background:#3a3c40"></div>
<div class="a" style="left:1096.5px;top:691px;width:1px;height:11px;background:#6a6c70"></div>
<div class="t" style="left:1099.5px;top:692.5px;font-size:9.5px;transform:scaleX(0.7727);transform-origin:0 0;color:#e0e0e0">DYN</div>
<div class="a" style="left:1118.5px;top:691px;width:25.5px;height:11px;background:#3a3c40"></div>
<div class="a" style="left:1117px;top:691px;width:1px;height:11px;background:#6a6c70"></div>
<div class="t" style="left:1120px;top:692.5px;font-size:9.5px;transform:scaleX(0.8197);transform-origin:0 0;color:#e0e0e0">QUAD</div>
<div class="a" style="left:1145.5px;top:691px;width:14px;height:11px;background:#3a3c40"></div>
<div class="a" style="left:1144px;top:691px;width:1px;height:11px;background:#6a6c70"></div>
<div class="t" style="left:1147px;top:692.5px;font-size:9.5px;transform:scaleX(0.8805);transform-origin:0 0;color:#e0e0e0">RT</div>
<div class="a" style="left:1161.5px;top:691px;width:18.59999999999991px;height:11px;background:#3a3c40"></div>
<div class="a" style="left:1160px;top:691px;width:1px;height:11px;background:#6a6c70"></div>
<div class="t" style="left:1163px;top:692.5px;font-size:9.5px;transform:scaleX(0.7986);transform-origin:0 0;color:#e0e0e0">HKA</div>
<div class="a" style="left:1180.8px;top:691px;width:1px;height:11px;background:#6a6c70"></div>
<div class="t" style="left:1183.8px;top:692.5px;font-size:9.5px;transform:scaleX(0.8255);transform-origin:0 0;color:#6a6c70">LOCKUI</div>
<div class="a" style="left:1214.5px;top:691px;width:1px;height:11px;background:#6a6c70"></div>
<div class="t" style="left:1217.5px;top:692.5px;font-size:9.5px;transform:scaleX(0.8586);transform-origin:0 0;color:#e0e0e0">None</div>
<svg class="a" style="left:1242px;top:695px;" width="7" height="4" viewBox="0 0 7 4"><path d="M0,0 H7 L3.5,4Z" fill="#d0d0d0"/></svg>
<div class="a" style="left:1276px;top:693px;width:1.5px;height:1.5px;background:#a0a0a0"></div>
<div class="a" style="left:1273px;top:696px;width:1.5px;height:1.5px;background:#a0a0a0"></div>
<div class="a" style="left:1276px;top:696px;width:1.5px;height:1.5px;background:#a0a0a0"></div>
<div class="a" style="left:1270px;top:699px;width:1.5px;height:1.5px;background:#a0a0a0"></div>
<div class="a" style="left:1273px;top:699px;width:1.5px;height:1.5px;background:#a0a0a0"></div>
<div class="a" style="left:1276px;top:699px;width:1.5px;height:1.5px;background:#a0a0a0"></div>
<div class="a" style="left:0px;top:702.5px;width:1280px;height:17.5px;background:#000"></div>
<div class="a" style="left:379px;top:182px;width:703px;height:457px;background:#f0f0f2;overflow:hidden">
<div class="a" style="left:0px;top:0px;width:703px;height:42px;background:#fff"></div>
<svg class="a" style="left:7px;top:7px" width="12" height="13" viewBox="0 0 12 13"><rect width="12" height="13" fill="#111"/><path d="M0,3 H12 M0,6.5 H12 M0,10 H12" stroke="#666" stroke-width="0.8"/><path d="M6,2 L8,6 L6,11 L4,6Z" fill="#d8e040"/></svg>
<div class="t" style="left:23px;top:8px;font-size:10.5px;transform:scaleX(0.8894);transform-origin:0 0;color:#909090">Traverse Editor - TRAVERSE.dwg</div>
<div class="a" style="left:601px;top:13px;width:10px;height:1px;background:#b8b8b8"></div>
<div class="a" style="left:639px;top:8px;width:9px;height:9px;border:1px solid #b8b8b8"></div>
<svg class="a" style="left:678px;top:8px" width="10" height="10"><path d="M0.5,0.5 L9.5,9.5 M9.5,0.5 L0.5,9.5" stroke="#a8a8a8" stroke-width="1"/></svg>
<div class="t" style="left:5px;top:29px;font-size:10px;color:#707070">File</div>
<div class="t" style="left:29px;top:29px;font-size:10px;color:#707070">Edit</div>
<div class="t" style="left:56px;top:29px;font-size:10px;color:#707070">Cut Sheets</div>
<div class="t" style="left:111.5px;top:29px;font-size:10px;color:#707070">Window</div>
<div class="t" style="left:157.5px;top:29px;font-size:10px;color:#707070">Format</div>
<div class="t" style="left:198px;top:29px;font-size:10px;color:#707070">Help</div>
<div class="a" style="left:0px;top:42px;width:703px;height:1px;background:#8c8c8c"></div>
<div class="a" style="left:0px;top:42.900000000000006px;width:15.8px;height:14.400000000000006px;background:#f0f0f0;border-right:1px solid #404040;border-bottom:1px solid #808080"></div>
<div class="a" style="left:0px;top:57.30000000000001px;width:15.8px;height:12.449999999999989px;background:#f0f0f0;border-right:1px solid #404040;border-bottom:1px solid #808080"></div>
<div class="a" style="left:0px;top:69.75px;width:15.8px;height:12.666666666666686px;background:#f0f0f0;border-right:1px solid #404040;border-bottom:1px solid #808080"></div>
<div class="a" style="left:0px;top:82.41666666666669px;width:15.8px;height:12.666666666666629px;background:#f0f0f0;border-right:1px solid #404040;border-bottom:1px solid #808080"></div>
<div class="a" style="left:0px;top:95.08333333333331px;width:15.8px;height:12.666666666666686px;background:#f0f0f0;border-right:1px solid #404040;border-bottom:1px solid #808080"></div>
<div class="a" style="left:0px;top:107.75px;width:15.8px;height:12.666666666666686px;background:#f0f0f0;border-right:1px solid #404040;border-bottom:1px solid #808080"></div>
<div class="a" style="left:0px;top:120.41666666666669px;width:15.8px;height:12.666666666666629px;background:#f0f0f0;border-right:1px solid #404040;border-bottom:1px solid #808080"></div>
<div class="a" style="left:0px;top:133.08333333333331px;width:15.8px;height:12.666666666666686px;background:#f0f0f0;border-right:1px solid #404040;border-bottom:1px solid #808080"></div>
<div class="a" style="left:0px;top:145.75px;width:15.8px;height:12.666666666666686px;background:#f0f0f0;border-right:1px solid #404040;border-bottom:1px solid #808080"></div>
<div class="a" style="left:0px;top:158.41666666666669px;width:15.8px;height:12.666666666666629px;background:#f0f0f0;border-right:1px solid #404040;border-bottom:1px solid #808080"></div>
<div class="a" style="left:0px;top:171.08333333333331px;width:15.8px;height:12.666666666666686px;background:#f0f0f0;border-right:1px solid #404040;border-bottom:1px solid #808080"></div>
<div class="a" style="left:0px;top:183.75px;width:15.8px;height:12.666666666666686px;background:#f0f0f0;border-right:1px solid #404040;border-bottom:1px solid #808080"></div>
<div class="a" style="left:0px;top:196.41666666666669px;width:15.8px;height:12.666666666666686px;background:#f0f0f0;border-right:1px solid #404040;border-bottom:1px solid #808080"></div>
<div class="a" style="left:0px;top:209.08333333333337px;width:15.8px;height:12.666666666666629px;background:#f0f0f0;border-right:1px solid #404040;border-bottom:1px solid #808080"></div>
<div class="a" style="left:0px;top:221.75px;width:15.8px;height:12.666666666666629px;background:#f0f0f0;border-right:1px solid #404040;border-bottom:1px solid #808080"></div>
<div class="a" style="left:0px;top:234.41666666666663px;width:15.8px;height:12.666666666666742px;background:#f0f0f0;border-right:1px solid #404040;border-bottom:1px solid #808080"></div>
<div class="a" style="left:0px;top:247.08333333333337px;width:15.8px;height:12.666666666666629px;background:#f0f0f0;border-right:1px solid #404040;border-bottom:1px solid #808080"></div>
<div class="a" style="left:0px;top:259.75px;width:15.8px;height:12.666666666666629px;background:#f0f0f0;border-right:1px solid #404040;border-bottom:1px solid #808080"></div>
<div class="a" style="left:0px;top:272.41666666666663px;width:15.8px;height:12.666666666666742px;background:#f0f0f0;border-right:1px solid #404040;border-bottom:1px solid #808080"></div>
<div class="a" style="left:0px;top:285.08333333333337px;width:15.8px;height:12.666666666666629px;background:#f0f0f0;border-right:1px solid #404040;border-bottom:1px solid #808080"></div>
<div class="a" style="left:0px;top:297.75px;width:15.8px;height:12.666666666666629px;background:#f0f0f0;border-right:1px solid #404040;border-bottom:1px solid #808080"></div>
<div class="a" style="left:0px;top:310.41666666666663px;width:15.8px;height:12.666666666666742px;background:#f0f0f0;border-right:1px solid #404040;border-bottom:1px solid #808080"></div>
<div class="a" style="left:0px;top:323.08333333333337px;width:15.8px;height:12.666666666666629px;background:#f0f0f0;border-right:1px solid #404040;border-bottom:1px solid #808080"></div>
<div class="a" style="left:0px;top:335.75px;width:15.8px;height:12.666666666666742px;background:#f0f0f0;border-right:1px solid #404040;border-bottom:1px solid #808080"></div>
<div class="a" style="left:0px;top:348.41666666666674px;width:15.8px;height:12.666666666666515px;background:#f0f0f0;border-right:1px solid #404040;border-bottom:1px solid #808080"></div>
<div class="a" style="left:0px;top:361.08333333333326px;width:15.8px;height:12.666666666666742px;background:#f0f0f0;border-right:1px solid #404040;border-bottom:1px solid #808080"></div>
<div class="a" style="left:0px;top:373.75px;width:15.8px;height:12.666666666666742px;background:#f0f0f0;border-right:1px solid #404040;border-bottom:1px solid #808080"></div>
<div class="a" style="left:0px;top:386.41666666666674px;width:15.8px;height:12.666666666666515px;background:#f0f0f0;border-right:1px solid #404040;border-bottom:1px solid #808080"></div>
<div class="a" style="left:0px;top:399.08333333333326px;width:15.8px;height:12.666666666666742px;background:#f0f0f0;border-right:1px solid #404040;border-bottom:1px solid #808080"></div>
<div class="a" style="left:0px;top:411.75px;width:15.8px;height:12.666666666666742px;background:#f0f0f0;border-right:1px solid #404040;border-bottom:1px solid #808080"></div>
<div class="a" style="left:0px;top:424.41666666666674px;width:15.8px;height:12.666666666666515px;background:#f0f0f0;border-right:1px solid #404040;border-bottom:1px solid #808080"></div>
<div class="a" style="left:0px;top:437.08333333333326px;width:15.8px;height:12.666666666666742px;background:#f0f0f0;border-right:1px solid #404040;border-bottom:1px solid #808080"></div>
<div class="a" style="left:0px;top:449.75px;width:15.8px;height:12.666666666666742px;background:#f0f0f0;border-right:1px solid #404040;border-bottom:1px solid #808080"></div>
<div class="a" style="left:15.800000000000011px;top:42.900000000000006px;width:60px;height:14.400000000000006px;background:#bff5c0;border-right:1px solid #a8a8a8;border-bottom:1px solid #a8a8a8"></div>
<div class="t" style="left:15.800000000000011px;top:44.869200000000035px;width:60px;text-align:center;font-size:9.4px;color:#204020;letter-spacing:-0.35px">Job Desc</div>
<div class="a" style="left:75.80000000000001px;top:42.900000000000006px;width:60px;height:14.400000000000006px;background:#bff5c0;border-right:1px solid #a8a8a8;border-bottom:1px solid #a8a8a8"></div>
<div class="t" style="left:75.80000000000001px;top:44.869200000000035px;width:60px;text-align:center;font-size:9.4px;color:#204020;letter-spacing:-0.35px">Crew</div>
<div class="a" style="left:135.79999999999995px;top:42.900000000000006px;width:60px;height:14.400000000000006px;background:#bff5c0;border-right:1px solid #a8a8a8;border-bottom:1px solid #a8a8a8"></div>
<div class="t" style="left:135.79999999999995px;top:44.869200000000035px;width:60px;text-align:center;font-size:9.4px;color:#204020;letter-spacing:-0.35px">Inst Num</div>
<div class="a" style="left:195.79999999999995px;top:42.900000000000006px;width:60px;height:14.400000000000006px;background:#bff5c0;border-right:1px solid #a8a8a8;border-bottom:1px solid #a8a8a8"></div>
<div class="t" style="left:195.79999999999995px;top:44.869200000000035px;width:60px;text-align:center;font-size:9.4px;color:#204020;letter-spacing:-0.35px">Temp</div>
<div class="a" style="left:255.79999999999995px;top:42.900000000000006px;width:60px;height:14.400000000000006px;background:#bff5c0;border-right:1px solid #a8a8a8;border-bottom:1px solid #a8a8a8"></div>
<div class="t" style="left:255.79999999999995px;top:44.869200000000035px;width:60px;text-align:center;font-size:9.4px;color:#204020;letter-spacing:-0.35px">Pressure</div>
<div class="a" style="left:315.79999999999995px;top:42.900000000000006px;width:60px;height:14.400000000000006px;background:#bff5c0;border-right:1px solid #a8a8a8;border-bottom:1px solid #a8a8a8"></div>
<div class="t" style="left:315.79999999999995px;top:44.869200000000035px;width:60px;text-align:center;font-size:9.4px;color:#204020;letter-spacing:-0.35px">Start Date</div>
<div class="a" style="left:375.79999999999995px;top:42.900000000000006px;width:60px;height:14.400000000000006px;background:#bff5c0;border-right:1px solid #a8a8a8;border-bottom:1px solid #a8a8a8"></div>
<div class="a" style="left:435.79999999999995px;top:42.900000000000006px;width:60px;height:14.400000000000006px;background:#bff5c0;border-right:1px solid #6a6a6a;border-bottom:1px solid #a8a8a8"></div>
<div class="a" style="left:15.800000000000011px;top:57.30000000000001px;width:60px;height:12.449999999999989px;background:#fff;border-right:1px solid #a8a8a8;border-bottom:1px solid #a8a8a8"></div>
<div class="t" style="left:17.80000000000001px;top:58.29420000000002px;font-size:9.4px;color:#2e2e2e;letter-spacing:-0.35px">Monitoring</div>
<div class="a" style="left:75.80000000000001px;top:57.30000000000001px;width:60px;height:12.449999999999989px;background:#fff;border-right:1px solid #a8a8a8;border-bottom:1px solid #a8a8a8"></div>
<div class="t" style="left:77.80000000000001px;top:58.29420000000002px;font-size:9.4px;color:#2e2e2e;letter-spacing:-0.35px">AB/CD</div>
<div class="a" style="left:135.79999999999995px;top:57.30000000000001px;width:60px;height:12.449999999999989px;background:#fff;border-right:1px solid #a8a8a8;border-bottom:1px solid #a8a8a8"></div>
<div class="a" style="left:195.79999999999995px;top:57.30000000000001px;width:60px;height:12.449999999999989px;background:#fff;border-right:1px solid #a8a8a8;border-bottom:1px solid #a8a8a8"></div>
<div class="a" style="left:255.79999999999995px;top:57.30000000000001px;width:60px;height:12.449999999999989px;background:#fff;border-right:1px solid #a8a8a8;border-bottom:1px solid #a8a8a8"></div>
<div class="a" style="left:315.79999999999995px;top:57.30000000000001px;width:60px;height:12.449999999999989px;background:#fff;border-right:1px solid #a8a8a8;border-bottom:1px solid #a8a8a8"></div>
<div class="t" style="left:317.79999999999995px;top:58.29420000000002px;font-size:9.4px;color:#2e2e2e;letter-spacing:-0.35px">07/03/24</div>
<div class="a" style="left:375.79999999999995px;top:57.30000000000001px;width:60px;height:12.449999999999989px;background:#fff;border-right:1px solid #a8a8a8;border-bottom:1px solid #a8a8a8"></div>
<div class="a" style="left:435.79999999999995px;top:57.30000000000001px;width:60px;height:12.449999999999989px;background:#fff;border-right:1px solid #6a6a6a;border-bottom:1px solid #a8a8a8"></div>
<div class="a" style="left:15.800000000000011px;top:69.75px;width:60px;height:12.666666666666686px;background:#ffff00;border-right:1px solid #505028;border-bottom:1px solid #505028"></div>
<div class="t" style="left:19.19999999999999px;top:70.9px;font-size:9.3px;color:#1a1a1a">Store Rdgs</div>
<div class="a" style="left:75.80000000000001px;top:69.75px;width:60px;height:12.666666666666686px;background:#fff;border-right:1px solid #a8a8a8;border-bottom:1px solid #a8a8a8"></div>
<div class="a" style="left:135.79999999999995px;top:69.75px;width:60px;height:12.666666666666686px;background:#fff;border-right:1px solid #a8a8a8;border-bottom:1px solid #a8a8a8"></div>
<div class="a" style="left:195.79999999999995px;top:69.75px;width:60px;height:12.666666666666686px;background:#fff;border-right:1px solid #a8a8a8;border-bottom:1px solid #a8a8a8"></div>
<div class="a" style="left:255.79999999999995px;top:69.75px;width:60px;height:12.666666666666686px;background:#fff;border-right:1px solid #a8a8a8;border-bottom:1px solid #a8a8a8"></div>
<div class="a" style="left:315.79999999999995px;top:69.75px;width:60px;height:12.666666666666686px;background:#fff;border-right:1px solid #a8a8a8;border-bottom:1px solid #a8a8a8"></div>
<div class="a" style="left:375.79999999999995px;top:69.75px;width:60px;height:12.666666666666686px;background:#fff;border-right:1px solid #a8a8a8;border-bottom:1px solid #a8a8a8"></div>
<div class="a" style="left:435.79999999999995px;top:69.75px;width:60px;height:12.666666666666686px;background:#ffff00;border-right:1px solid #6a6a6a;border-bottom:1px solid #404020"></div>
<div class="a" style="left:15.800000000000011px;top:82.41666666666669px;width:60px;height:12.666666666666629px;background:#ffff00;border-right:1px solid #505028;border-bottom:1px solid #505028"></div>
<div class="t" style="left:39.30000000000001px;top:83.56666666666666px;font-size:9.3px;color:#1a1a1a">S</div>
<div class="a" style="left:75.80000000000001px;top:82.41666666666669px;width:60px;height:12.666666666666629px;background:#fff;border-right:1px solid #a8a8a8;border-bottom:1px solid #a8a8a8"></div>
<div class="a" style="left:135.79999999999995px;top:82.41666666666669px;width:60px;height:12.666666666666629px;background:#fff;border-right:1px solid #a8a8a8;border-bottom:1px solid #a8a8a8"></div>
<div class="a" style="left:195.79999999999995px;top:82.41666666666669px;width:60px;height:12.666666666666629px;background:#fff;border-right:1px solid #a8a8a8;border-bottom:1px solid #a8a8a8"></div>
<div class="a" style="left:255.79999999999995px;top:82.41666666666669px;width:60px;height:12.666666666666629px;background:#fff;border-right:1px solid #a8a8a8;border-bottom:1px solid #a8a8a8"></div>
<div class="a" style="left:315.79999999999995px;top:82.41666666666669px;width:60px;height:12.666666666666629px;background:#fff;border-right:1px solid #a8a8a8;border-bottom:1px solid #a8a8a8"></div>
<div class="a" style="left:375.79999999999995px;top:82.41666666666669px;width:60px;height:12.666666666666629px;background:#fff;border-right:1px solid #a8a8a8;border-bottom:1px solid #a8a8a8"></div>
<div class="a" style="left:435.79999999999995px;top:82.41666666666669px;width:60px;height:12.666666666666629px;background:#fff;border-right:1px solid #6a6a6a;border-bottom:1px solid #a8a8a8"></div>
<div class="a" style="left:15.800000000000011px;top:95.08333333333331px;width:60px;height:12.666666666666686px;background:#ffff00;border-right:1px solid #505028;border-bottom:1px solid #505028"></div>
<div class="t" style="left:39.30000000000001px;top:96.23333333333329px;font-size:9.3px;color:#1a1a1a">S</div>
<div class="a" style="left:75.80000000000001px;top:95.08333333333331px;width:60px;height:12.666666666666686px;background:#fff;border-right:1px solid #a8a8a8;border-bottom:1px solid #a8a8a8"></div>
<div class="a" style="left:135.79999999999995px;top:95.08333333333331px;width:60px;height:12.666666666666686px;background:#fff;border-right:1px solid #a8a8a8;border-bottom:1px solid #a8a8a8"></div>
<div class="a" style="left:195.79999999999995px;top:95.08333333333331px;width:60px;height:12.666666666666686px;background:#fff;border-right:1px solid #a8a8a8;border-bottom:1px solid #a8a8a8"></div>
<div class="a" style="left:255.79999999999995px;top:95.08333333333331px;width:60px;height:12.666666666666686px;background:#fff;border-right:1px solid #a8a8a8;border-bottom:1px solid #a8a8a8"></div>
<div class="a" style="left:315.79999999999995px;top:95.08333333333331px;width:60px;height:12.666666666666686px;background:#fff;border-right:1px solid #a8a8a8;border-bottom:1px solid #a8a8a8"></div>
<div class="a" style="left:375.79999999999995px;top:95.08333333333331px;width:60px;height:12.666666666666686px;background:#fff;border-right:1px solid #a8a8a8;border-bottom:1px solid #a8a8a8"></div>
<div class="a" style="left:435.79999999999995px;top:95.08333333333331px;width:60px;height:12.666666666666686px;background:#fff;border-right:1px solid #6a6a6a;border-bottom:1px solid #a8a8a8"></div>
<div class="a" style="left:15.800000000000011px;top:107.75px;width:60px;height:12.666666666666686px;background:#ffff00;border-right:1px solid #505028;border-bottom:1px solid #505028"></div>
<div class="t" style="left:39.30000000000001px;top:108.89999999999998px;font-size:9.3px;color:#1a1a1a">S</div>
<div class="a" style="left:75.80000000000001px;top:107.75px;width:60px;height:12.666666666666686px;background:#fff;border-right:1px solid #a8a8a8;border-bottom:1px solid #a8a8a8"></div>
<div class="a" style="left:135.79999999999995px;top:107.75px;width:60px;height:12.666666666666686px;background:#fff;border-right:1px solid #a8a8a8;border-bottom:1px solid #a8a8a8"></div>
<div class="a" style="left:195.79999999999995px;top:107.75px;width:60px;height:12.666666666666686px;background:#fff;border-right:1px solid #a8a8a8;border-bottom:1px solid #a8a8a8"></div>
<div class="a" style="left:255.79999999999995px;top:107.75px;width:60px;height:12.666666666666686px;background:#fff;border-right:1px solid #a8a8a8;border-bottom:1px solid #a8a8a8"></div>
<div class="a" style="left:315.79999999999995px;top:107.75px;width:60px;height:12.666666666666686px;background:#fff;border-right:1px solid #a8a8a8;border-bottom:1px solid #a8a8a8"></div>
<div class="a" style="left:375.79999999999995px;top:107.75px;width:60px;height:12.666666666666686px;background:#fff;border-right:1px solid #a8a8a8;border-bottom:1px solid #a8a8a8"></div>
<div class="a" style="left:435.79999999999995px;top:107.75px;width:60px;height:12.666666666666686px;background:#fff;border-right:1px solid #6a6a6a;border-bottom:1px solid #a8a8a8"></div>
<div class="a" style="left:15.800000000000011px;top:120.41666666666669px;width:60px;height:12.666666666666629px;background:#ffff00;border-right:1px solid #505028;border-bottom:1px solid #505028"></div>
<div class="t" style="left:39.30000000000001px;top:121.56666666666666px;font-size:9.3px;color:#1a1a1a">S</div>
<div class="a" style="left:75.80000000000001px;top:120.41666666666669px;width:60px;height:12.666666666666629px;background:#fff;border-right:1px solid #a8a8a8;border-bottom:1px solid #a8a8a8"></div>
<div class="a" style="left:135.79999999999995px;top:120.41666666666669px;width:60px;height:12.666666666666629px;background:#fff;border-right:1px solid #a8a8a8;border-bottom:1px solid #a8a8a8"></div>
<div class="a" style="left:195.79999999999995px;top:120.41666666666669px;width:60px;height:12.666666666666629px;background:#fff;border-right:1px solid #a8a8a8;border-bottom:1px solid #a8a8a8"></div>
<div class="a" style="left:255.79999999999995px;top:120.41666666666669px;width:60px;height:12.666666666666629px;background:#fff;border-right:1px solid #a8a8a8;border-bottom:1px solid #a8a8a8"></div>
<div class="a" style="left:315.79999999999995px;top:120.41666666666669px;width:60px;height:12.666666666666629px;background:#fff;border-right:1px solid #a8a8a8;border-bottom:1px solid #a8a8a8"></div>
<div class="a" style="left:375.79999999999995px;top:120.41666666666669px;width:60px;height:12.666666666666629px;background:#fff;border-right:1px solid #a8a8a8;border-bottom:1px solid #a8a8a8"></div>
<div class="a" style="left:435.79999999999995px;top:120.41666666666669px;width:60px;height:12.666666666666629px;background:#fff;border-right:1px solid #6a6a6a;border-bottom:1px solid #a8a8a8"></div>
<div class="a" style="left:15.800000000000011px;top:133.08333333333331px;width:60px;height:12.666666666666686px;background:#ffffd8;border-right:1px solid #707070;border-bottom:1px solid #707070"></div>
<div class="t" style="left:21.19999999999999px;top:134.2333333333333px;font-size:9.3px;color:#1a1a1a">Occupied Pt</div>
<div class="a" style="left:75.80000000000001px;top:133.08333333333331px;width:60px;height:12.666666666666686px;background:#fff;border-right:1px solid #a8a8a8;border-bottom:1px solid #a8a8a8"></div>
<div class="a" style="left:135.79999999999995px;top:133.08333333333331px;width:60px;height:12.666666666666686px;background:#fff;border-right:1px solid #a8a8a8;border-bottom:1px solid #a8a8a8"></div>
<div class="a" style="left:195.79999999999995px;top:133.08333333333331px;width:60px;height:12.666666666666686px;background:#fff;border-right:1px solid #a8a8a8;border-bottom:1px solid #a8a8a8"></div>
<div class="a" style="left:255.79999999999995px;top:133.08333333333331px;width:60px;height:12.666666666666686px;background:#fff;border-right:1px solid #a8a8a8;border-bottom:1px solid #a8a8a8"></div>
<div class="a" style="left:315.79999999999995px;top:133.08333333333331px;width:60px;height:12.666666666666686px;background:#fff;border-right:1px solid #a8a8a8;border-bottom:1px solid #a8a8a8"></div>
<div class="a" style="left:375.79999999999995px;top:133.08333333333331px;width:60px;height:12.666666666666686px;background:#fff;border-right:1px solid #a8a8a8;border-bottom:1px solid #a8a8a8"></div>
<div class="a" style="left:435.79999999999995px;top:133.08333333333331px;width:60px;height:12.666666666666686px;background:#ffffd8;border-right:1px solid #6a6a6a;border-bottom:1px solid #404020"></div>
<div class="a" style="left:15.800000000000011px;top:145.75px;width:60px;height:12.666666666666686px;background:#ffffd8;border-right:1px solid #707070;border-bottom:1px solid #707070"></div>
<div class="a" style="left:75.80000000000001px;top:145.75px;width:60px;height:12.666666666666686px;background:#fff;border-right:1px solid #a8a8a8;border-bottom:1px solid #a8a8a8"></div>
<div class="a" style="left:135.79999999999995px;top:145.75px;width:60px;height:12.666666666666686px;background:#fff;border-right:1px solid #a8a8a8;border-bottom:1px solid #a8a8a8"></div>
<div class="a" style="left:195.79999999999995px;top:145.75px;width:60px;height:12.666666666666686px;background:#fff;border-right:1px solid #a8a8a8;border-bottom:1px solid #a8a8a8"></div>
<div class="a" style="left:255.79999999999995px;top:145.75px;width:60px;height:12.666666666666686px;background:#fff;border-right:1px solid #a8a8a8;border-bottom:1px solid #a8a8a8"></div>
<div class="a" style="left:315.79999999999995px;top:145.75px;width:60px;height:12.666666666666686px;background:#fff;border-right:1px solid #a8a8a8;border-bottom:1px solid #a8a8a8"></div>
<div class="a" style="left:375.79999999999995px;top:145.75px;width:60px;height:12.666666666666686px;background:#fff;border-right:1px solid #a8a8a8;border-bottom:1px solid #a8a8a8"></div>
<div class="a" style="left:435.79999999999995px;top:145.75px;width:60px;height:12.666666666666686px;background:#ffffd8;border-right:1px solid #6a6a6a;border-bottom:1px solid #a8a8a8"></div>
<div class="a" style="left:15.800000000000011px;top:158.41666666666669px;width:60px;height:12.666666666666629px;background:#d8d8d8;border-right:1px solid #707070;border-bottom:1px solid #707070"></div>
<div class="t" style="left:36px;top:159.56666666666666px;font-size:9.3px;color:#1a1a1a">Note</div>
<div class="a" style="left:75.80000000000001px;top:158.41666666666669px;width:60px;height:12.666666666666629px;background:#fff;border-right:1px solid #a8a8a8;border-bottom:1px solid #a8a8a8"></div>
<div class="a" style="left:135.79999999999995px;top:158.41666666666669px;width:60px;height:12.666666666666629px;background:#fff;border-right:1px solid #a8a8a8;border-bottom:1px solid #a8a8a8"></div>
<div class="a" style="left:195.79999999999995px;top:158.41666666666669px;width:60px;height:12.666666666666629px;background:#fff;border-right:1px solid #a8a8a8;border-bottom:1px solid #a8a8a8"></div>
<div class="a" style="left:255.79999999999995px;top:158.41666666666669px;width:60px;height:12.666666666666629px;background:#fff;border-right:1px solid #a8a8a8;border-bottom:1px solid #a8a8a8"></div>
<div class="a" style="left:315.79999999999995px;top:158.41666666666669px;width:60px;height:12.666666666666629px;background:#fff;border-right:1px solid #a8a8a8;border-bottom:1px solid #a8a8a8"></div>
<div class="a" style="left:375.79999999999995px;top:158.41666666666669px;width:60px;height:12.666666666666629px;background:#fff;border-right:1px solid #a8a8a8;border-bottom:1px solid #a8a8a8"></div>
<div class="a" style="left:435.79999999999995px;top:158.41666666666669px;width:60px;height:12.666666666666629px;background:#e8e8ee;border-right:1px solid #6a6a6a;border-bottom:1px solid #a8a8a8"></div>
<div class="a" style="left:15.800000000000011px;top:171.08333333333331px;width:60px;height:12.666666666666686px;background:#d8d8d8;border-right:1px solid #707070;border-bottom:1px solid #707070"></div>
<div class="t" style="left:36px;top:172.2333333333333px;font-size:9.3px;color:#1a1a1a">Note</div>
<div class="a" style="left:75.80000000000001px;top:171.08333333333331px;width:60px;height:12.666666666666686px;background:#fff;border-right:1px solid #a8a8a8;border-bottom:1px solid #a8a8a8"></div>
<div class="a" style="left:135.79999999999995px;top:171.08333333333331px;width:60px;height:12.666666666666686px;background:#fff;border-right:1px solid #a8a8a8;border-bottom:1px solid #a8a8a8"></div>
<div class="a" style="left:195.79999999999995px;top:171.08333333333331px;width:60px;height:12.666666666666686px;background:#fff;border-right:1px solid #a8a8a8;border-bottom:1px solid #a8a8a8"></div>
<div class="a" style="left:255.79999999999995px;top:171.08333333333331px;width:60px;height:12.666666666666686px;background:#fff;border-right:1px solid #a8a8a8;border-bottom:1px solid #a8a8a8"></div>
<div class="a" style="left:315.79999999999995px;top:171.08333333333331px;width:60px;height:12.666666666666686px;background:#fff;border-right:1px solid #a8a8a8;border-bottom:1px solid #a8a8a8"></div>
<div class="a" style="left:375.79999999999995px;top:171.08333333333331px;width:60px;height:12.666666666666686px;background:#fff;border-right:1px solid #a8a8a8;border-bottom:1px solid #a8a8a8"></div>
<div class="a" style="left:435.79999999999995px;top:171.08333333333331px;width:60px;height:12.666666666666686px;background:#e8e8ee;border-right:1px solid #6a6a6a;border-bottom:1px solid #a8a8a8"></div>
<div class="a" style="left:15.800000000000011px;top:183.75px;width:60px;height:12.666666666666686px;background:#d8d8d8;border-right:1px solid #707070;border-bottom:1px solid #707070"></div>
<div class="t" style="left:36px;top:184.89999999999998px;font-size:9.3px;color:#1a1a1a">Note</div>
<div class="a" style="left:75.80000000000001px;top:183.75px;width:60px;height:12.666666666666686px;background:#fff;border-right:1px solid #a8a8a8;border-bottom:1px solid #a8a8a8"></div>
<div class="a" style="left:135.79999999999995px;top:183.75px;width:60px;height:12.666666666666686px;background:#fff;border-right:1px solid #a8a8a8;border-bottom:1px solid #a8a8a8"></div>
<div class="a" style="left:195.79999999999995px;top:183.75px;width:60px;height:12.666666666666686px;background:#fff;border-right:1px solid #a8a8a8;border-bottom:1px solid #a8a8a8"></div>
<div class="a" style="left:255.79999999999995px;top:183.75px;width:60px;height:12.666666666666686px;background:#fff;border-right:1px solid #a8a8a8;border-bottom:1px solid #a8a8a8"></div>
<div class="a" style="left:315.79999999999995px;top:183.75px;width:60px;height:12.666666666666686px;background:#fff;border-right:1px solid #a8a8a8;border-bottom:1px solid #a8a8a8"></div>
<div class="a" style="left:375.79999999999995px;top:183.75px;width:60px;height:12.666666666666686px;background:#fff;border-right:1px solid #a8a8a8;border-bottom:1px solid #a8a8a8"></div>
<div class="a" style="left:435.79999999999995px;top:183.75px;width:60px;height:12.666666666666686px;background:#e8e8ee;border-right:1px solid #6a6a6a;border-bottom:1px solid #a8a8a8"></div>
<div class="a" style="left:15.800000000000011px;top:196.41666666666669px;width:60px;height:12.666666666666686px;background:#d8d8fa;border-right:1px solid #707070;border-bottom:1px solid #707070"></div>
<div class="t" style="left:25.5px;top:197.56666666666666px;font-size:9.3px;color:#1a1a1a">Shot Type</div>
<div class="a" style="left:75.80000000000001px;top:196.41666666666669px;width:60px;height:12.666666666666686px;background:#fff;border-right:1px solid #a8a8a8;border-bottom:1px solid #a8a8a8"></div>
<div class="a" style="left:135.79999999999995px;top:196.41666666666669px;width:60px;height:12.666666666666686px;background:#fff;border-right:1px solid #a8a8a8;border-bottom:1px solid #a8a8a8"></div>
<div class="a" style="left:195.79999999999995px;top:196.41666666666669px;width:60px;height:12.666666666666686px;background:#fff;border-right:1px solid #a8a8a8;border-bottom:1px solid #a8a8a8"></div>
<div class="a" style="left:255.79999999999995px;top:196.41666666666669px;width:60px;height:12.666666666666686px;background:#fff;border-right:1px solid #a8a8a8;border-bottom:1px solid #a8a8a8"></div>
<div class="a" style="left:315.79999999999995px;top:196.41666666666669px;width:60px;height:12.666666666666686px;background:#fff;border-right:1px solid #a8a8a8;border-bottom:1px solid #a8a8a8"></div>
<div class="a" style="left:375.79999999999995px;top:196.41666666666669px;width:60px;height:12.666666666666686px;background:#fff;border-right:1px solid #a8a8a8;border-bottom:1px solid #a8a8a8"></div>
<div class="a" style="left:435.79999999999995px;top:196.41666666666669px;width:60px;height:12.666666666666686px;background:#d8d8fa;border-right:1px solid #6a6a6a;border-bottom:1px solid #a8a8a8"></div>
<div class="a" style="left:15.800000000000011px;top:209.08333333333337px;width:60px;height:12.666666666666629px;background:#d8d8fa;border-right:1px solid #707070;border-bottom:1px solid #707070"></div>
<div class="t" style="left:39.30000000000001px;top:210.23333333333335px;font-size:9.3px;color:#1a1a1a">S</div>
<div class="a" style="left:75.80000000000001px;top:209.08333333333337px;width:60px;height:12.666666666666629px;background:#fff;border-right:1px solid #a8a8a8;border-bottom:1px solid #a8a8a8"></div>
<div class="a" style="left:135.79999999999995px;top:209.08333333333337px;width:60px;height:12.666666666666629px;background:#fff;border-right:1px solid #a8a8a8;border-bottom:1px solid #a8a8a8"></div>
<div class="a" style="left:195.79999999999995px;top:209.08333333333337px;width:60px;height:12.666666666666629px;background:#fff;border-right:1px solid #a8a8a8;border-bottom:1px solid #a8a8a8"></div>
<div class="a" style="left:255.79999999999995px;top:209.08333333333337px;width:60px;height:12.666666666666629px;background:#fff;border-right:1px solid #a8a8a8;border-bottom:1px solid #a8a8a8"></div>
<div class="a" style="left:315.79999999999995px;top:209.08333333333337px;width:60px;height:12.666666666666629px;background:#fff;border-right:1px solid #a8a8a8;border-bottom:1px solid #a8a8a8"></div>
<div class="a" style="left:375.79999999999995px;top:209.08333333333337px;width:60px;height:12.666666666666629px;background:#fff;border-right:1px solid #a8a8a8;border-bottom:1px solid #a8a8a8"></div>
<div class="a" style="left:435.79999999999995px;top:209.08333333333337px;width:60px;height:12.666666666666629px;background:#fff;border-right:1px solid #6a6a6a;border-bottom:1px solid #a8a8a8"></div>
<div class="a" style="left:15.800000000000011px;top:221.75px;width:60px;height:12.666666666666629px;background:#d8d8d8;border-right:1px solid #707070;border-bottom:1px solid #707070"></div>
<div class="t" style="left:36px;top:222.89999999999998px;font-size:9.3px;color:#1a1a1a">Note</div>
<div class="a" style="left:75.80000000000001px;top:221.75px;width:60px;height:12.666666666666629px;background:#fff;border-right:1px solid #a8a8a8;border-bottom:1px solid #a8a8a8"></div>
<div class="a" style="left:135.79999999999995px;top:221.75px;width:60px;height:12.666666666666629px;background:#fff;border-right:1px solid #a8a8a8;border-bottom:1px solid #a8a8a8"></div>
<div class="a" style="left:195.79999999999995px;top:221.75px;width:60px;height:12.666666666666629px;background:#fff;border-right:1px solid #a8a8a8;border-bottom:1px solid #a8a8a8"></div>
<div class="a" style="left:255.79999999999995px;top:221.75px;width:60px;height:12.666666666666629px;background:#fff;border-right:1px solid #a8a8a8;border-bottom:1px solid #a8a8a8"></div>
<div class="a" style="left:315.79999999999995px;top:221.75px;width:60px;height:12.666666666666629px;background:#fff;border-right:1px solid #a8a8a8;border-bottom:1px solid #a8a8a8"></div>
<div class="a" style="left:375.79999999999995px;top:221.75px;width:60px;height:12.666666666666629px;background:#fff;border-right:1px solid #a8a8a8;border-bottom:1px solid #a8a8a8"></div>
<div class="a" style="left:435.79999999999995px;top:221.75px;width:60px;height:12.666666666666629px;background:#e8e8ee;border-right:1px solid #6a6a6a;border-bottom:1px solid #a8a8a8"></div>
<div class="a" style="left:15.800000000000011px;top:234.41666666666663px;width:60px;height:12.666666666666742px;background:#d8d8fa;border-right:1px solid #707070;border-bottom:1px solid #707070"></div>
<div class="t" style="left:39.30000000000001px;top:235.5666666666666px;font-size:9.3px;color:#1a1a1a">S</div>
<div class="a" style="left:75.80000000000001px;top:234.41666666666663px;width:60px;height:12.666666666666742px;background:#fff;border-right:1px solid #a8a8a8;border-bottom:1px solid #a8a8a8"></div>
<div class="a" style="left:135.79999999999995px;top:234.41666666666663px;width:60px;height:12.666666666666742px;background:#fff;border-right:1px solid #a8a8a8;border-bottom:1px solid #a8a8a8"></div>
<div class="a" style="left:195.79999999999995px;top:234.41666666666663px;width:60px;height:12.666666666666742px;background:#fff;border-right:1px solid #a8a8a8;border-bottom:1px solid #a8a8a8"></div>
<div class="a" style="left:255.79999999999995px;top:234.41666666666663px;width:60px;height:12.666666666666742px;background:#fff;border-right:1px solid #a8a8a8;border-bottom:1px solid #a8a8a8"></div>
<div class="a" style="left:315.79999999999995px;top:234.41666666666663px;width:60px;height:12.666666666666742px;background:#fff;border-right:1px solid #a8a8a8;border-bottom:1px solid #a8a8a8"></div>
<div class="a" style="left:375.79999999999995px;top:234.41666666666663px;width:60px;height:12.666666666666742px;background:#fff;border-right:1px solid #a8a8a8;border-bottom:1px solid #a8a8a8"></div>
<div class="a" style="left:435.79999999999995px;top:234.41666666666663px;width:60px;height:12.666666666666742px;background:#fff;border-right:1px solid #6a6a6a;border-bottom:1px solid #a8a8a8"></div>
<div class="a" style="left:15.800000000000011px;top:247.08333333333337px;width:60px;height:12.666666666666629px;background:#d8d8d8;border-right:1px solid #707070;border-bottom:1px solid #707070"></div>
<div class="t" style="left:36px;top:248.23333333333335px;font-size:9.3px;color:#1a1a1a">Note</div>
<div class="a" style="left:75.80000000000001px;top:247.08333333333337px;width:60px;height:12.666666666666629px;background:#fff;border-right:1px solid #a8a8a8;border-bottom:1px solid #a8a8a8"></div>
<div class="a" style="left:135.79999999999995px;top:247.08333333333337px;width:60px;height:12.666666666666629px;background:#fff;border-right:1px solid #a8a8a8;border-bottom:1px solid #a8a8a8"></div>
<div class="a" style="left:195.79999999999995px;top:247.08333333333337px;width:60px;height:12.666666666666629px;background:#fff;border-right:1px solid #a8a8a8;border-bottom:1px solid #a8a8a8"></div>
<div class="a" style="left:255.79999999999995px;top:247.08333333333337px;width:60px;height:12.666666666666629px;background:#fff;border-right:1px solid #a8a8a8;border-bottom:1px solid #a8a8a8"></div>
<div class="a" style="left:315.79999999999995px;top:247.08333333333337px;width:60px;height:12.666666666666629px;background:#fff;border-right:1px solid #a8a8a8;border-bottom:1px solid #a8a8a8"></div>
<div class="a" style="left:375.79999999999995px;top:247.08333333333337px;width:60px;height:12.666666666666629px;background:#fff;border-right:1px solid #a8a8a8;border-bottom:1px solid #a8a8a8"></div>
<div class="a" style="left:435.79999999999995px;top:247.08333333333337px;width:60px;height:12.666666666666629px;background:#e8e8ee;border-right:1px solid #6a6a6a;border-bottom:1px solid #a8a8a8"></div>
<div class="a" style="left:15.800000000000011px;top:259.75px;width:60px;height:12.666666666666629px;background:#d8d8fa;border-right:1px solid #707070;border-bottom:1px solid #707070"></div>
<div class="t" style="left:39.30000000000001px;top:260.9px;font-size:9.3px;color:#1a1a1a">S</div>
<div class="a" style="left:75.80000000000001px;top:259.75px;width:60px;height:12.666666666666629px;background:#fff;border-right:1px solid #a8a8a8;border-bottom:1px solid #a8a8a8"></div>
<div class="a" style="left:135.79999999999995px;top:259.75px;width:60px;height:12.666666666666629px;background:#fff;border-right:1px solid #a8a8a8;border-bottom:1px solid #a8a8a8"></div>
<div class="a" style="left:195.79999999999995px;top:259.75px;width:60px;height:12.666666666666629px;background:#fff;border-right:1px solid #a8a8a8;border-bottom:1px solid #a8a8a8"></div>
<div class="a" style="left:255.79999999999995px;top:259.75px;width:60px;height:12.666666666666629px;background:#fff;border-right:1px solid #a8a8a8;border-bottom:1px solid #a8a8a8"></div>
<div class="a" style="left:315.79999999999995px;top:259.75px;width:60px;height:12.666666666666629px;background:#fff;border-right:1px solid #a8a8a8;border-bottom:1px solid #a8a8a8"></div>
<div class="a" style="left:375.79999999999995px;top:259.75px;width:60px;height:12.666666666666629px;background:#fff;border-right:1px solid #a8a8a8;border-bottom:1px solid #a8a8a8"></div>
<div class="a" style="left:435.79999999999995px;top:259.75px;width:60px;height:12.666666666666629px;background:#fff;border-right:1px solid #6a6a6a;border-bottom:1px solid #a8a8a8"></div>
<div class="a" style="left:15.800000000000011px;top:272.41666666666663px;width:60px;height:12.666666666666742px;background:#ffffd8;border-right:1px solid #707070;border-bottom:1px solid #707070"></div>
<div class="t" style="left:21.19999999999999px;top:273.5666666666666px;font-size:9.3px;color:#1a1a1a">Occupied Pt</div>
<div class="a" style="left:75.80000000000001px;top:272.41666666666663px;width:60px;height:12.666666666666742px;background:#fff;border-right:1px solid #a8a8a8;border-bottom:1px solid #a8a8a8"></div>
<div class="a" style="left:135.79999999999995px;top:272.41666666666663px;width:60px;height:12.666666666666742px;background:#fff;border-right:1px solid #a8a8a8;border-bottom:1px solid #a8a8a8"></div>
<div class="a" style="left:195.79999999999995px;top:272.41666666666663px;width:60px;height:12.666666666666742px;background:#fff;border-right:1px solid #a8a8a8;border-bottom:1px solid #a8a8a8"></div>
<div class="a" style="left:255.79999999999995px;top:272.41666666666663px;width:60px;height:12.666666666666742px;background:#fff;border-right:1px solid #a8a8a8;border-bottom:1px solid #a8a8a8"></div>
<div class="a" style="left:315.79999999999995px;top:272.41666666666663px;width:60px;height:12.666666666666742px;background:#fff;border-right:1px solid #a8a8a8;border-bottom:1px solid #a8a8a8"></div>
<div class="a" style="left:375.79999999999995px;top:272.41666666666663px;width:60px;height:12.666666666666742px;background:#fff;border-right:1px solid #a8a8a8;border-bottom:1px solid #a8a8a8"></div>
<div class="a" style="left:435.79999999999995px;top:272.41666666666663px;width:60px;height:12.666666666666742px;background:#ffffd8;border-right:1px solid #6a6a6a;border-bottom:1px solid #404020"></div>
<div class="a" style="left:15.800000000000011px;top:285.08333333333337px;width:60px;height:12.666666666666629px;background:#ffffd8;border-right:1px solid #a8a8a8;border-bottom:1px solid #a8a8a8"></div>
<div class="t" style="left:15.800000000000011px;top:286.1858666666667px;width:57.5px;text-align:right;font-size:9.4px;color:#2e2e2e;letter-spacing:-0.35px">6000</div>
<div class="a" style="left:75.80000000000001px;top:285.08333333333337px;width:60px;height:12.666666666666629px;background:#ffffd8;border-right:1px solid #a8a8a8;border-bottom:1px solid #a8a8a8"></div>
<div class="t" style="left:75.80000000000001px;top:286.1858666666667px;width:57.5px;text-align:right;font-size:9.4px;color:#2e2e2e;letter-spacing:-0.35px">6478</div>
<div class="a" style="left:135.79999999999995px;top:285.08333333333337px;width:60px;height:12.666666666666629px;background:#ffffd8;border-right:1px solid #a8a8a8;border-bottom:1px solid #a8a8a8"></div>
<div class="a" style="left:195.79999999999995px;top:285.08333333333337px;width:60px;height:12.666666666666629px;background:#ffffd8;border-right:1px solid #a8a8a8;border-bottom:1px solid #a8a8a8"></div>
<div class="t" style="left:195.79999999999995px;top:286.1858666666667px;width:57.5px;text-align:right;font-size:9.4px;color:#2e2e2e;letter-spacing:-0.35px">156&#176;01'02"</div>
<div class="a" style="left:255.79999999999995px;top:285.08333333333337px;width:60px;height:12.666666666666629px;background:#ffffd8;border-right:1px solid #a8a8a8;border-bottom:1px solid #a8a8a8"></div>
<div class="t" style="left:255.79999999999995px;top:286.1858666666667px;width:57.5px;text-align:right;font-size:9.4px;color:#2e2e2e;letter-spacing:-0.35px">1.524</div>
<div class="a" style="left:315.79999999999995px;top:285.08333333333337px;width:60px;height:12.666666666666629px;background:#ffffd8;border-right:1px solid #ffffd8;border-bottom:1px solid #ffffd8"></div>
<div class="a" style="left:375.79999999999995px;top:285.08333333333337px;width:60px;height:12.666666666666629px;background:#ffffd8;border-right:1px solid #ffffd8;border-bottom:1px solid #ffffd8"></div>
<div class="a" style="left:435.79999999999995px;top:285.08333333333337px;width:60px;height:12.666666666666629px;background:#ffffd8;border-right:1px solid #6a6a6a;border-bottom:1px solid #a8a8a8"></div>
<div class="a" style="left:15px;top:283.48333333333335px;width:480px;height:1.6px;background:#303030"></div>
<div class="a" style="left:15.800000000000011px;top:297.75px;width:60px;height:12.666666666666629px;background:#d8d8fa;border-right:1px solid #505070;border-bottom:1px solid #505070"></div>
<div class="t" style="left:15.800000000000011px;top:298.8525333333333px;width:60px;text-align:center;font-size:9.4px;color:#202040;letter-spacing:-0.35px">Shot Type</div>
<div class="a" style="left:75.80000000000001px;top:297.75px;width:60px;height:12.666666666666629px;background:#d8d8fa;border-right:1px solid #505070;border-bottom:1px solid #505070"></div>
<div class="t" style="left:75.80000000000001px;top:298.8525333333333px;width:60px;text-align:center;font-size:9.4px;color:#202040;letter-spacing:-0.35px">Shot Pt</div>
<div class="a" style="left:135.79999999999995px;top:297.75px;width:60px;height:12.666666666666629px;background:#d8d8fa;border-right:1px solid #505070;border-bottom:1px solid #505070"></div>
<div class="t" style="left:135.79999999999995px;top:298.8525333333333px;width:60px;text-align:center;font-size:9.4px;color:#202040;letter-spacing:-0.35px">Targ Ht</div>
<div class="a" style="left:195.79999999999995px;top:297.75px;width:60px;height:12.666666666666629px;background:#d8d8fa;border-right:1px solid #505070;border-bottom:1px solid #505070"></div>
<div class="t" style="left:195.79999999999995px;top:298.8525333333333px;width:60px;text-align:center;font-size:9.4px;color:#202040;letter-spacing:-0.35px">Hz Ang</div>
<div class="a" style="left:255.79999999999995px;top:297.75px;width:60px;height:12.666666666666629px;background:#d8d8fa;border-right:1px solid #505070;border-bottom:1px solid #505070"></div>
<div class="t" style="left:255.79999999999995px;top:298.8525333333333px;width:60px;text-align:center;font-size:9.4px;color:#202040;letter-spacing:-0.35px">Vt Ang</div>
<div class="a" style="left:315.79999999999995px;top:297.75px;width:60px;height:12.666666666666629px;background:#d8d8fa;border-right:1px solid #505070;border-bottom:1px solid #505070"></div>
<div class="t" style="left:315.79999999999995px;top:298.8525333333333px;width:60px;text-align:center;font-size:9.4px;color:#202040;letter-spacing:-0.35px">Slp Dist</div>
<div class="a" style="left:375.79999999999995px;top:297.75px;width:60px;height:12.666666666666629px;background:#d8d8fa;border-right:1px solid #505070;border-bottom:1px solid #505070"></div>
<div class="t" style="left:375.79999999999995px;top:298.8525333333333px;width:60px;text-align:center;font-size:9.4px;color:#202040;letter-spacing:-0.35px">Desc</div>
<div class="a" style="left:435.79999999999995px;top:297.75px;width:60px;height:12.666666666666629px;background:#d8d8fa;border-right:1px solid #6a6a6a;border-bottom:1px solid #505070"></div>
<div class="a" style="left:15.800000000000011px;top:310.41666666666663px;width:60px;height:12.666666666666742px;background:#d8d8fa;border-right:1px solid #303050;border-bottom:1px solid #303050"></div>
<div class="t" style="left:15.800000000000011px;top:311.5192px;width:60px;text-align:center;font-size:9.4px;color:#202040;letter-spacing:-0.35px">SS</div>
<div class="a" style="left:75.80000000000001px;top:310.41666666666663px;width:60px;height:12.666666666666742px;background:#fff;border-right:1px solid #a8a8a8;border-bottom:1px solid #a8a8a8"></div>
<div class="t" style="left:75.80000000000001px;top:311.5192px;width:57.5px;text-align:right;font-size:9.4px;color:#2e2e2e;letter-spacing:-0.35px">6478</div>
<div class="a" style="left:135.79999999999995px;top:310.41666666666663px;width:60px;height:12.666666666666742px;background:#fff;border-right:1px solid #a8a8a8;border-bottom:1px solid #a8a8a8"></div>
<div class="t" style="left:135.79999999999995px;top:311.5192px;width:57.5px;text-align:right;font-size:9.4px;color:#2e2e2e;letter-spacing:-0.35px">1.547</div>
<div class="a" style="left:195.79999999999995px;top:310.41666666666663px;width:60px;height:12.666666666666742px;background:#fff;border-right:1px solid #a8a8a8;border-bottom:1px solid #a8a8a8"></div>
<div class="t" style="left:195.79999999999995px;top:311.5192px;width:57.5px;text-align:right;font-size:9.4px;color:#2e2e2e;letter-spacing:-0.35px">156&#176;01'02"</div>
<div class="a" style="left:255.79999999999995px;top:310.41666666666663px;width:60px;height:12.666666666666742px;background:#fff;border-right:1px solid #a8a8a8;border-bottom:1px solid #a8a8a8"></div>
<div class="t" style="left:255.79999999999995px;top:311.5192px;width:57.5px;text-align:right;font-size:9.4px;color:#2e2e2e;letter-spacing:-0.35px">90&#176;23'07"</div>
<div class="a" style="left:315.79999999999995px;top:310.41666666666663px;width:60px;height:12.666666666666742px;background:#fff;border-right:1px solid #a8a8a8;border-bottom:1px solid #a8a8a8"></div>
<div class="t" style="left:315.79999999999995px;top:311.5192px;width:57.5px;text-align:right;font-size:9.4px;color:#2e2e2e;letter-spacing:-0.35px">164.563</div>
<div class="a" style="left:375.79999999999995px;top:310.41666666666663px;width:60px;height:12.666666666666742px;background:#fff;border-right:1px solid #a8a8a8;border-bottom:1px solid #a8a8a8"></div>
<div class="t" style="left:375.79999999999995px;top:311.5192px;width:57.5px;text-align:right;font-size:9.4px;color:#2e2e2e;letter-spacing:-0.35px">RBR</div>
<div class="a" style="left:435.79999999999995px;top:310.41666666666663px;width:60px;height:12.666666666666742px;background:#fff;border-right:1px solid #6a6a6a;border-bottom:1px solid #a8a8a8"></div>
<div class="a" style="left:15.800000000000011px;top:323.08333333333337px;width:60px;height:12.666666666666629px;background:#d8d8fa;border-right:1px solid #303050;border-bottom:1px solid #303050"></div>
<div class="t" style="left:15.800000000000011px;top:324.1858666666667px;width:60px;text-align:center;font-size:9.4px;color:#202040;letter-spacing:-0.35px">SS</div>
<div class="a" style="left:75.80000000000001px;top:323.08333333333337px;width:60px;height:12.666666666666629px;background:#fff;border-right:1px solid #a8a8a8;border-bottom:1px solid #a8a8a8"></div>
<div class="t" style="left:75.80000000000001px;top:324.1858666666667px;width:57.5px;text-align:right;font-size:9.4px;color:#2e2e2e;letter-spacing:-0.35px">6478</div>
<div class="a" style="left:135.79999999999995px;top:323.08333333333337px;width:60px;height:12.666666666666629px;background:#fff;border-right:1px solid #a8a8a8;border-bottom:1px solid #a8a8a8"></div>
<div class="t" style="left:135.79999999999995px;top:324.1858666666667px;width:57.5px;text-align:right;font-size:9.4px;color:#2e2e2e;letter-spacing:-0.35px">1.547</div>
<div class="a" style="left:195.79999999999995px;top:323.08333333333337px;width:60px;height:12.666666666666629px;background:#fff;border-right:1px solid #a8a8a8;border-bottom:1px solid #a8a8a8"></div>
<div class="t" style="left:195.79999999999995px;top:324.1858666666667px;width:57.5px;text-align:right;font-size:9.4px;color:#2e2e2e;letter-spacing:-0.35px">336&#176;00'52"</div>
<div class="a" style="left:255.79999999999995px;top:323.08333333333337px;width:60px;height:12.666666666666629px;background:#fff;border-right:1px solid #a8a8a8;border-bottom:1px solid #a8a8a8"></div>
<div class="t" style="left:255.79999999999995px;top:324.1858666666667px;width:57.5px;text-align:right;font-size:9.4px;color:#2e2e2e;letter-spacing:-0.35px">269&#176;36'42"</div>
<div class="a" style="left:315.79999999999995px;top:323.08333333333337px;width:60px;height:12.666666666666629px;background:#fff;border-right:1px solid #a8a8a8;border-bottom:1px solid #a8a8a8"></div>
<div class="t" style="left:315.79999999999995px;top:324.1858666666667px;width:57.5px;text-align:right;font-size:9.4px;color:#2e2e2e;letter-spacing:-0.35px">164.564</div>
<div class="a" style="left:375.79999999999995px;top:323.08333333333337px;width:60px;height:12.666666666666629px;background:#fff;border-right:1px solid #a8a8a8;border-bottom:1px solid #a8a8a8"></div>
<div class="t" style="left:375.79999999999995px;top:324.1858666666667px;width:57.5px;text-align:right;font-size:9.4px;color:#2e2e2e;letter-spacing:-0.35px">RBR</div>
<div class="a" style="left:435.79999999999995px;top:323.08333333333337px;width:60px;height:12.666666666666629px;background:#fff;border-right:1px solid #6a6a6a;border-bottom:1px solid #a8a8a8"></div>
<div class="a" style="left:15.800000000000011px;top:335.75px;width:60px;height:12.666666666666742px;background:#d8d8fa;border-right:1px solid #303050;border-bottom:1px solid #303050"></div>
<div class="t" style="left:15.800000000000011px;top:336.8525333333333px;width:60px;text-align:center;font-size:9.4px;color:#202040;letter-spacing:-0.35px">SS</div>
<div class="a" style="left:75.80000000000001px;top:335.75px;width:60px;height:12.666666666666742px;background:#fff;border-right:1px solid #a8a8a8;border-bottom:1px solid #a8a8a8"></div>
<div class="t" style="left:75.80000000000001px;top:336.8525333333333px;width:57.5px;text-align:right;font-size:9.4px;color:#2e2e2e;letter-spacing:-0.35px">50</div>
<div class="a" style="left:135.79999999999995px;top:335.75px;width:60px;height:12.666666666666742px;background:#fff;border-right:1px solid #a8a8a8;border-bottom:1px solid #a8a8a8"></div>
<div class="t" style="left:135.79999999999995px;top:336.8525333333333px;width:57.5px;text-align:right;font-size:9.4px;color:#2e2e2e;letter-spacing:-0.35px">0.000</div>
<div class="a" style="left:195.79999999999995px;top:335.75px;width:60px;height:12.666666666666742px;background:#fff;border-right:1px solid #a8a8a8;border-bottom:1px solid #a8a8a8"></div>
<div class="t" style="left:195.79999999999995px;top:336.8525333333333px;width:57.5px;text-align:right;font-size:9.4px;color:#2e2e2e;letter-spacing:-0.35px">192&#176;51'44"</div>
<div class="a" style="left:255.79999999999995px;top:335.75px;width:60px;height:12.666666666666742px;background:#fff;border-right:1px solid #a8a8a8;border-bottom:1px solid #a8a8a8"></div>
<div class="t" style="left:255.79999999999995px;top:336.8525333333333px;width:57.5px;text-align:right;font-size:9.4px;color:#2e2e2e;letter-spacing:-0.35px">87&#176;22'55"</div>
<div class="a" style="left:315.79999999999995px;top:335.75px;width:60px;height:12.666666666666742px;background:#fff;border-right:1px solid #a8a8a8;border-bottom:1px solid #a8a8a8"></div>
<div class="t" style="left:315.79999999999995px;top:336.8525333333333px;width:57.5px;text-align:right;font-size:9.4px;color:#2e2e2e;letter-spacing:-0.35px">101.333</div>
<div class="a" style="left:375.79999999999995px;top:335.75px;width:60px;height:12.666666666666742px;background:#fff;border-right:1px solid #a8a8a8;border-bottom:1px solid #a8a8a8"></div>
<div class="t" style="left:375.79999999999995px;top:336.8525333333333px;width:57.5px;text-align:right;font-size:9.4px;color:#2e2e2e;letter-spacing:-0.35px">TGT</div>
<div class="a" style="left:435.79999999999995px;top:335.75px;width:60px;height:12.666666666666742px;background:#fff;border-right:1px solid #6a6a6a;border-bottom:1px solid #a8a8a8"></div>
<div class="a" style="left:15.800000000000011px;top:348.41666666666674px;width:60px;height:12.666666666666515px;background:#d8d8fa;border-right:1px solid #303050;border-bottom:1px solid #303050"></div>
<div class="t" style="left:15.800000000000011px;top:349.51919999999996px;width:60px;text-align:center;font-size:9.4px;color:#202040;letter-spacing:-0.35px">SS</div>
<div class="a" style="left:75.80000000000001px;top:348.41666666666674px;width:60px;height:12.666666666666515px;background:#fff;border-right:1px solid #a8a8a8;border-bottom:1px solid #a8a8a8"></div>
<div class="t" style="left:75.80000000000001px;top:349.51919999999996px;width:57.5px;text-align:right;font-size:9.4px;color:#2e2e2e;letter-spacing:-0.35px">50</div>
<div class="a" style="left:135.79999999999995px;top:348.41666666666674px;width:60px;height:12.666666666666515px;background:#fff;border-right:1px solid #a8a8a8;border-bottom:1px solid #a8a8a8"></div>
<div class="t" style="left:135.79999999999995px;top:349.51919999999996px;width:57.5px;text-align:right;font-size:9.4px;color:#2e2e2e;letter-spacing:-0.35px">0.000</div>
<div class="a" style="left:195.79999999999995px;top:348.41666666666674px;width:60px;height:12.666666666666515px;background:#fff;border-right:1px solid #a8a8a8;border-bottom:1px solid #a8a8a8"></div>
<div class="t" style="left:195.79999999999995px;top:349.51919999999996px;width:57.5px;text-align:right;font-size:9.4px;color:#2e2e2e;letter-spacing:-0.35px">12&#176;51'29"</div>
<div class="a" style="left:255.79999999999995px;top:348.41666666666674px;width:60px;height:12.666666666666515px;background:#fff;border-right:1px solid #a8a8a8;border-bottom:1px solid #a8a8a8"></div>
<div class="t" style="left:255.79999999999995px;top:349.51919999999996px;width:57.5px;text-align:right;font-size:9.4px;color:#2e2e2e;letter-spacing:-0.35px">272&#176;36'54"</div>
<div class="a" style="left:315.79999999999995px;top:348.41666666666674px;width:60px;height:12.666666666666515px;background:#fff;border-right:1px solid #a8a8a8;border-bottom:1px solid #a8a8a8"></div>
<div class="t" style="left:315.79999999999995px;top:349.51919999999996px;width:57.5px;text-align:right;font-size:9.4px;color:#2e2e2e;letter-spacing:-0.35px">101.332</div>
<div class="a" style="left:375.79999999999995px;top:348.41666666666674px;width:60px;height:12.666666666666515px;background:#fff;border-right:1px solid #a8a8a8;border-bottom:1px solid #a8a8a8"></div>
<div class="t" style="left:375.79999999999995px;top:349.51919999999996px;width:57.5px;text-align:right;font-size:9.4px;color:#2e2e2e;letter-spacing:-0.35px">TGT</div>
<div class="a" style="left:435.79999999999995px;top:348.41666666666674px;width:60px;height:12.666666666666515px;background:#fff;border-right:1px solid #6a6a6a;border-bottom:1px solid #a8a8a8"></div>
<div class="a" style="left:15.800000000000011px;top:361.08333333333326px;width:60px;height:12.666666666666742px;background:#d8d8fa;border-right:1px solid #303050;border-bottom:1px solid #303050"></div>
<div class="t" style="left:15.800000000000011px;top:362.1858666666666px;width:60px;text-align:center;font-size:9.4px;color:#202040;letter-spacing:-0.35px">SS</div>
<div class="a" style="left:75.80000000000001px;top:361.08333333333326px;width:60px;height:12.666666666666742px;background:#fff;border-right:1px solid #a8a8a8;border-bottom:1px solid #a8a8a8"></div>
<div class="t" style="left:75.80000000000001px;top:362.1858666666666px;width:57.5px;text-align:right;font-size:9.4px;color:#2e2e2e;letter-spacing:-0.35px">51</div>
<div class="a" style="left:135.79999999999995px;top:361.08333333333326px;width:60px;height:12.666666666666742px;background:#fff;border-right:1px solid #a8a8a8;border-bottom:1px solid #a8a8a8"></div>
<div class="t" style="left:135.79999999999995px;top:362.1858666666666px;width:57.5px;text-align:right;font-size:9.4px;color:#2e2e2e;letter-spacing:-0.35px">0.000</div>
<div class="a" style="left:195.79999999999995px;top:361.08333333333326px;width:60px;height:12.666666666666742px;background:#fff;border-right:1px solid #a8a8a8;border-bottom:1px solid #a8a8a8"></div>
<div class="t" style="left:195.79999999999995px;top:362.1858666666666px;width:57.5px;text-align:right;font-size:9.4px;color:#2e2e2e;letter-spacing:-0.35px">192&#176;41'25"</div>
<div class="a" style="left:255.79999999999995px;top:361.08333333333326px;width:60px;height:12.666666666666742px;background:#fff;border-right:1px solid #a8a8a8;border-bottom:1px solid #a8a8a8"></div>
<div class="t" style="left:255.79999999999995px;top:362.1858666666666px;width:57.5px;text-align:right;font-size:9.4px;color:#2e2e2e;letter-spacing:-0.35px">88&#176;01'58"</div>
<div class="a" style="left:315.79999999999995px;top:361.08333333333326px;width:60px;height:12.666666666666742px;background:#fff;border-right:1px solid #a8a8a8;border-bottom:1px solid #a8a8a8"></div>
<div class="t" style="left:315.79999999999995px;top:362.1858666666666px;width:57.5px;text-align:right;font-size:9.4px;color:#2e2e2e;letter-spacing:-0.35px">101.206</div>
<div class="a" style="left:375.79999999999995px;top:361.08333333333326px;width:60px;height:12.666666666666742px;background:#fff;border-right:1px solid #a8a8a8;border-bottom:1px solid #a8a8a8"></div>
<div class="t" style="left:375.79999999999995px;top:362.1858666666666px;width:57.5px;text-align:right;font-size:9.4px;color:#2e2e2e;letter-spacing:-0.35px">TGT</div>
<div class="a" style="left:435.79999999999995px;top:361.08333333333326px;width:60px;height:12.666666666666742px;background:#fff;border-right:1px solid #6a6a6a;border-bottom:1px solid #a8a8a8"></div>
<div class="a" style="left:15.800000000000011px;top:373.75px;width:60px;height:12.666666666666742px;background:#d8d8fa;border-right:1px solid #303050;border-bottom:1px solid #303050"></div>
<div class="t" style="left:15.800000000000011px;top:374.8525333333333px;width:60px;text-align:center;font-size:9.4px;color:#202040;letter-spacing:-0.35px">SS</div>
<div class="a" style="left:75.80000000000001px;top:373.75px;width:60px;height:12.666666666666742px;background:#fff;border-right:1px solid #a8a8a8;border-bottom:1px solid #a8a8a8"></div>
<div class="t" style="left:75.80000000000001px;top:374.8525333333333px;width:57.5px;text-align:right;font-size:9.4px;color:#2e2e2e;letter-spacing:-0.35px">51</div>
<div class="a" style="left:135.79999999999995px;top:373.75px;width:60px;height:12.666666666666742px;background:#fff;border-right:1px solid #a8a8a8;border-bottom:1px solid #a8a8a8"></div>
<div class="t" style="left:135.79999999999995px;top:374.8525333333333px;width:57.5px;text-align:right;font-size:9.4px;color:#2e2e2e;letter-spacing:-0.35px">0.000</div>
<div class="a" style="left:195.79999999999995px;top:373.75px;width:60px;height:12.666666666666742px;background:#fff;border-right:1px solid #a8a8a8;border-bottom:1px solid #a8a8a8"></div>
<div class="t" style="left:195.79999999999995px;top:374.8525333333333px;width:57.5px;text-align:right;font-size:9.4px;color:#2e2e2e;letter-spacing:-0.35px">12&#176;41'34"</div>
<div class="a" style="left:255.79999999999995px;top:373.75px;width:60px;height:12.666666666666742px;background:#fff;border-right:1px solid #a8a8a8;border-bottom:1px solid #a8a8a8"></div>
<div class="t" style="left:255.79999999999995px;top:374.8525333333333px;width:57.5px;text-align:right;font-size:9.4px;color:#2e2e2e;letter-spacing:-0.35px">271&#176;57'47"</div>
<div class="a" style="left:315.79999999999995px;top:373.75px;width:60px;height:12.666666666666742px;background:#fff;border-right:1px solid #a8a8a8;border-bottom:1px solid #a8a8a8"></div>
<div class="t" style="left:315.79999999999995px;top:374.8525333333333px;width:57.5px;text-align:right;font-size:9.4px;color:#2e2e2e;letter-spacing:-0.35px">101.205</div>
<div class="a" style="left:375.79999999999995px;top:373.75px;width:60px;height:12.666666666666742px;background:#fff;border-right:1px solid #a8a8a8;border-bottom:1px solid #a8a8a8"></div>
<div class="t" style="left:375.79999999999995px;top:374.8525333333333px;width:57.5px;text-align:right;font-size:9.4px;color:#2e2e2e;letter-spacing:-0.35px">TGT</div>
<div class="a" style="left:435.79999999999995px;top:373.75px;width:60px;height:12.666666666666742px;background:#fff;border-right:1px solid #6a6a6a;border-bottom:1px solid #a8a8a8"></div>
<div class="a" style="left:15.800000000000011px;top:386.41666666666674px;width:60px;height:12.666666666666515px;background:#d8d8fa;border-right:1px solid #303050;border-bottom:1px solid #303050"></div>
<div class="t" style="left:15.800000000000011px;top:387.51919999999996px;width:60px;text-align:center;font-size:9.4px;color:#202040;letter-spacing:-0.35px">SS</div>
<div class="a" style="left:75.80000000000001px;top:386.41666666666674px;width:60px;height:12.666666666666515px;background:#fff;border-right:1px solid #a8a8a8;border-bottom:1px solid #a8a8a8"></div>
<div class="t" style="left:75.80000000000001px;top:387.51919999999996px;width:57.5px;text-align:right;font-size:9.4px;color:#2e2e2e;letter-spacing:-0.35px">52</div>
<div class="a" style="left:135.79999999999995px;top:386.41666666666674px;width:60px;height:12.666666666666515px;background:#fff;border-right:1px solid #a8a8a8;border-bottom:1px solid #a8a8a8"></div>
<div class="t" style="left:135.79999999999995px;top:387.51919999999996px;width:57.5px;text-align:right;font-size:9.4px;color:#2e2e2e;letter-spacing:-0.35px">0.000</div>
<div class="a" style="left:195.79999999999995px;top:386.41666666666674px;width:60px;height:12.666666666666515px;background:#fff;border-right:1px solid #a8a8a8;border-bottom:1px solid #a8a8a8"></div>
<div class="t" style="left:195.79999999999995px;top:387.51919999999996px;width:57.5px;text-align:right;font-size:9.4px;color:#2e2e2e;letter-spacing:-0.35px">195&#176;36'06"</div>
<div class="a" style="left:255.79999999999995px;top:386.41666666666674px;width:60px;height:12.666666666666515px;background:#fff;border-right:1px solid #a8a8a8;border-bottom:1px solid #a8a8a8"></div>
<div class="t" style="left:255.79999999999995px;top:387.51919999999996px;width:57.5px;text-align:right;font-size:9.4px;color:#2e2e2e;letter-spacing:-0.35px">87&#176;37'59"</div>
<div class="a" style="left:315.79999999999995px;top:386.41666666666674px;width:60px;height:12.666666666666515px;background:#fff;border-right:1px solid #a8a8a8;border-bottom:1px solid #a8a8a8"></div>
<div class="t" style="left:315.79999999999995px;top:387.51919999999996px;width:57.5px;text-align:right;font-size:9.4px;color:#2e2e2e;letter-spacing:-0.35px">86.585</div>
<div class="a" style="left:375.79999999999995px;top:386.41666666666674px;width:60px;height:12.666666666666515px;background:#fff;border-right:1px solid #a8a8a8;border-bottom:1px solid #a8a8a8"></div>
<div class="t" style="left:375.79999999999995px;top:387.51919999999996px;width:57.5px;text-align:right;font-size:9.4px;color:#2e2e2e;letter-spacing:-0.35px">TGT</div>
<div class="a" style="left:435.79999999999995px;top:386.41666666666674px;width:60px;height:12.666666666666515px;background:#fff;border-right:1px solid #6a6a6a;border-bottom:1px solid #a8a8a8"></div>
<div class="a" style="left:15.800000000000011px;top:399.08333333333326px;width:60px;height:12.666666666666742px;background:#d8d8fa;border-right:1px solid #303050;border-bottom:1px solid #303050"></div>
<div class="t" style="left:15.800000000000011px;top:400.1858666666666px;width:60px;text-align:center;font-size:9.4px;color:#202040;letter-spacing:-0.35px">SS</div>
<div class="a" style="left:75.80000000000001px;top:399.08333333333326px;width:60px;height:12.666666666666742px;background:#fff;border-right:1px solid #a8a8a8;border-bottom:1px solid #a8a8a8"></div>
<div class="t" style="left:75.80000000000001px;top:400.1858666666666px;width:57.5px;text-align:right;font-size:9.4px;color:#2e2e2e;letter-spacing:-0.35px">52</div>
<div class="a" style="left:135.79999999999995px;top:399.08333333333326px;width:60px;height:12.666666666666742px;background:#fff;border-right:1px solid #a8a8a8;border-bottom:1px solid #a8a8a8"></div>
<div class="t" style="left:135.79999999999995px;top:400.1858666666666px;width:57.5px;text-align:right;font-size:9.4px;color:#2e2e2e;letter-spacing:-0.35px">0.000</div>
<div class="a" style="left:195.79999999999995px;top:399.08333333333326px;width:60px;height:12.666666666666742px;background:#fff;border-right:1px solid #a8a8a8;border-bottom:1px solid #a8a8a8"></div>
<div class="t" style="left:195.79999999999995px;top:400.1858666666666px;width:57.5px;text-align:right;font-size:9.4px;color:#2e2e2e;letter-spacing:-0.35px">15&#176;35'49"</div>
<div class="a" style="left:255.79999999999995px;top:399.08333333333326px;width:60px;height:12.666666666666742px;background:#fff;border-right:1px solid #a8a8a8;border-bottom:1px solid #a8a8a8"></div>
<div class="t" style="left:255.79999999999995px;top:400.1858666666666px;width:57.5px;text-align:right;font-size:9.4px;color:#2e2e2e;letter-spacing:-0.35px">272&#176;21'56"</div>
<div class="a" style="left:315.79999999999995px;top:399.08333333333326px;width:60px;height:12.666666666666742px;background:#fff;border-right:1px solid #a8a8a8;border-bottom:1px solid #a8a8a8"></div>
<div class="t" style="left:315.79999999999995px;top:400.1858666666666px;width:57.5px;text-align:right;font-size:9.4px;color:#2e2e2e;letter-spacing:-0.35px">86.586</div>
<div class="a" style="left:375.79999999999995px;top:399.08333333333326px;width:60px;height:12.666666666666742px;background:#fff;border-right:1px solid #a8a8a8;border-bottom:1px solid #a8a8a8"></div>
<div class="t" style="left:375.79999999999995px;top:400.1858666666666px;width:57.5px;text-align:right;font-size:9.4px;color:#2e2e2e;letter-spacing:-0.35px">TGT</div>
<div class="a" style="left:435.79999999999995px;top:399.08333333333326px;width:60px;height:12.666666666666742px;background:#fff;border-right:1px solid #6a6a6a;border-bottom:1px solid #a8a8a8"></div>
<div class="a" style="left:15.800000000000011px;top:411.75px;width:60px;height:12.666666666666742px;background:#d8d8fa;border-right:1px solid #303050;border-bottom:1px solid #303050"></div>
<div class="t" style="left:15.800000000000011px;top:412.8525333333333px;width:60px;text-align:center;font-size:9.4px;color:#202040;letter-spacing:-0.35px">SS</div>
<div class="a" style="left:75.80000000000001px;top:411.75px;width:60px;height:12.666666666666742px;background:#fff;border-right:1px solid #a8a8a8;border-bottom:1px solid #a8a8a8"></div>
<div class="t" style="left:75.80000000000001px;top:412.8525333333333px;width:57.5px;text-align:right;font-size:9.4px;color:#2e2e2e;letter-spacing:-0.35px">53</div>
<div class="a" style="left:135.79999999999995px;top:411.75px;width:60px;height:12.666666666666742px;background:#fff;border-right:1px solid #a8a8a8;border-bottom:1px solid #a8a8a8"></div>
<div class="t" style="left:135.79999999999995px;top:412.8525333333333px;width:57.5px;text-align:right;font-size:9.4px;color:#2e2e2e;letter-spacing:-0.35px">0.000</div>
<div class="a" style="left:195.79999999999995px;top:411.75px;width:60px;height:12.666666666666742px;background:#fff;border-right:1px solid #a8a8a8;border-bottom:1px solid #a8a8a8"></div>
<div class="t" style="left:195.79999999999995px;top:412.8525333333333px;width:57.5px;text-align:right;font-size:9.4px;color:#2e2e2e;letter-spacing:-0.35px">195&#176;26'59"</div>
<div class="a" style="left:255.79999999999995px;top:411.75px;width:60px;height:12.666666666666742px;background:#fff;border-right:1px solid #a8a8a8;border-bottom:1px solid #a8a8a8"></div>
<div class="t" style="left:255.79999999999995px;top:412.8525333333333px;width:57.5px;text-align:right;font-size:9.4px;color:#2e2e2e;letter-spacing:-0.35px">88&#176;41'14"</div>
<div class="a" style="left:315.79999999999995px;top:411.75px;width:60px;height:12.666666666666742px;background:#fff;border-right:1px solid #a8a8a8;border-bottom:1px solid #a8a8a8"></div>
<div class="t" style="left:315.79999999999995px;top:412.8525333333333px;width:57.5px;text-align:right;font-size:9.4px;color:#2e2e2e;letter-spacing:-0.35px">86.505</div>
<div class="a" style="left:375.79999999999995px;top:411.75px;width:60px;height:12.666666666666742px;background:#fff;border-right:1px solid #a8a8a8;border-bottom:1px solid #a8a8a8"></div>
<div class="t" style="left:375.79999999999995px;top:412.8525333333333px;width:57.5px;text-align:right;font-size:9.4px;color:#2e2e2e;letter-spacing:-0.35px">TGT</div>
<div class="a" style="left:435.79999999999995px;top:411.75px;width:60px;height:12.666666666666742px;background:#fff;border-right:1px solid #6a6a6a;border-bottom:1px solid #a8a8a8"></div>
<div class="a" style="left:15.800000000000011px;top:424.41666666666674px;width:60px;height:12.666666666666515px;background:#d8d8fa;border-right:1px solid #303050;border-bottom:1px solid #303050"></div>
<div class="t" style="left:15.800000000000011px;top:425.51919999999996px;width:60px;text-align:center;font-size:9.4px;color:#202040;letter-spacing:-0.35px">SS</div>
<div class="a" style="left:75.80000000000001px;top:424.41666666666674px;width:60px;height:12.666666666666515px;background:#fff;border-right:1px solid #a8a8a8;border-bottom:1px solid #a8a8a8"></div>
<div class="t" style="left:75.80000000000001px;top:425.51919999999996px;width:57.5px;text-align:right;font-size:9.4px;color:#2e2e2e;letter-spacing:-0.35px">53</div>
<div class="a" style="left:135.79999999999995px;top:424.41666666666674px;width:60px;height:12.666666666666515px;background:#fff;border-right:1px solid #a8a8a8;border-bottom:1px solid #a8a8a8"></div>
<div class="t" style="left:135.79999999999995px;top:425.51919999999996px;width:57.5px;text-align:right;font-size:9.4px;color:#2e2e2e;letter-spacing:-0.35px">0.000</div>
<div class="a" style="left:195.79999999999995px;top:424.41666666666674px;width:60px;height:12.666666666666515px;background:#fff;border-right:1px solid #a8a8a8;border-bottom:1px solid #a8a8a8"></div>
<div class="t" style="left:195.79999999999995px;top:425.51919999999996px;width:57.5px;text-align:right;font-size:9.4px;color:#2e2e2e;letter-spacing:-0.35px">15&#176;26'41"</div>
<div class="a" style="left:255.79999999999995px;top:424.41666666666674px;width:60px;height:12.666666666666515px;background:#fff;border-right:1px solid #a8a8a8;border-bottom:1px solid #a8a8a8"></div>
<div class="t" style="left:255.79999999999995px;top:425.51919999999996px;width:57.5px;text-align:right;font-size:9.4px;color:#2e2e2e;letter-spacing:-0.35px">271&#176;18'41"</div>
<div class="a" style="left:315.79999999999995px;top:424.41666666666674px;width:60px;height:12.666666666666515px;background:#fff;border-right:1px solid #a8a8a8;border-bottom:1px solid #a8a8a8"></div>
<div class="t" style="left:315.79999999999995px;top:425.51919999999996px;width:57.5px;text-align:right;font-size:9.4px;color:#2e2e2e;letter-spacing:-0.35px">86.506</div>
<div class="a" style="left:375.79999999999995px;top:424.41666666666674px;width:60px;height:12.666666666666515px;background:#fff;border-right:1px solid #a8a8a8;border-bottom:1px solid #a8a8a8"></div>
<div class="t" style="left:375.79999999999995px;top:425.51919999999996px;width:57.5px;text-align:right;font-size:9.4px;color:#2e2e2e;letter-spacing:-0.35px">TGT</div>
<div class="a" style="left:435.79999999999995px;top:424.41666666666674px;width:60px;height:12.666666666666515px;background:#fff;border-right:1px solid #6a6a6a;border-bottom:1px solid #a8a8a8"></div>
<div class="a" style="left:15.800000000000011px;top:437.08333333333326px;width:60px;height:12.666666666666742px;background:#d8d8fa;border-right:1px solid #303050;border-bottom:1px solid #303050"></div>
<div class="t" style="left:15.800000000000011px;top:438.1858666666666px;width:60px;text-align:center;font-size:9.4px;color:#202040;letter-spacing:-0.35px">SS</div>
<div class="a" style="left:75.80000000000001px;top:437.08333333333326px;width:60px;height:12.666666666666742px;background:#fff;border-right:1px solid #a8a8a8;border-bottom:1px solid #a8a8a8"></div>
<div class="t" style="left:75.80000000000001px;top:438.1858666666666px;width:57.5px;text-align:right;font-size:9.4px;color:#2e2e2e;letter-spacing:-0.35px">56</div>
<div class="a" style="left:135.79999999999995px;top:437.08333333333326px;width:60px;height:12.666666666666742px;background:#fff;border-right:1px solid #a8a8a8;border-bottom:1px solid #a8a8a8"></div>
<div class="t" style="left:135.79999999999995px;top:438.1858666666666px;width:57.5px;text-align:right;font-size:9.4px;color:#2e2e2e;letter-spacing:-0.35px">0.000</div>
<div class="a" style="left:195.79999999999995px;top:437.08333333333326px;width:60px;height:12.666666666666742px;background:#fff;border-right:1px solid #a8a8a8;border-bottom:1px solid #a8a8a8"></div>
<div class="t" style="left:195.79999999999995px;top:438.1858666666666px;width:57.5px;text-align:right;font-size:9.4px;color:#2e2e2e;letter-spacing:-0.35px">200&#176;46'40"</div>
<div class="a" style="left:255.79999999999995px;top:437.08333333333326px;width:60px;height:12.666666666666742px;background:#fff;border-right:1px solid #a8a8a8;border-bottom:1px solid #a8a8a8"></div>
<div class="t" style="left:255.79999999999995px;top:438.1858666666666px;width:57.5px;text-align:right;font-size:9.4px;color:#2e2e2e;letter-spacing:-0.35px">88&#176;09'44"</div>
<div class="a" style="left:315.79999999999995px;top:437.08333333333326px;width:60px;height:12.666666666666742px;background:#fff;border-right:1px solid #a8a8a8;border-bottom:1px solid #a8a8a8"></div>
<div class="t" style="left:315.79999999999995px;top:438.1858666666666px;width:57.5px;text-align:right;font-size:9.4px;color:#2e2e2e;letter-spacing:-0.35px">69.750</div>
<div class="a" style="left:375.79999999999995px;top:437.08333333333326px;width:60px;height:12.666666666666742px;background:#fff;border-right:1px solid #a8a8a8;border-bottom:1px solid #a8a8a8"></div>
<div class="t" style="left:375.79999999999995px;top:438.1858666666666px;width:57.5px;text-align:right;font-size:9.4px;color:#2e2e2e;letter-spacing:-0.35px">TGT</div>
<div class="a" style="left:435.79999999999995px;top:437.08333333333326px;width:60px;height:12.666666666666742px;background:#fff;border-right:1px solid #6a6a6a;border-bottom:1px solid #a8a8a8"></div>
<div class="a" style="left:15.800000000000011px;top:449.75px;width:60px;height:12.666666666666742px;background:#d8d8d8;border-right:1px solid #a8a8a8;border-bottom:1px solid #a8a8a8"></div>
<div class="t" style="left:15.800000000000011px;top:450.8525333333333px;width:60px;text-align:center;font-size:9.4px;color:#2e2e2e;letter-spacing:-0.35px">Note</div>
<div class="a" style="left:75.80000000000001px;top:449.75px;width:60px;height:12.666666666666742px;background:#fff;border-right:1px solid #fff;border-bottom:1px solid #fff"></div>
<div class="a" style="left:135.79999999999995px;top:449.75px;width:60px;height:12.666666666666742px;background:#fff;border-right:1px solid #fff;border-bottom:1px solid #fff"></div>
<div class="a" style="left:195.79999999999995px;top:449.75px;width:60px;height:12.666666666666742px;background:#fff;border-right:1px solid #fff;border-bottom:1px solid #fff"></div>
<div class="a" style="left:255.79999999999995px;top:449.75px;width:60px;height:12.666666666666742px;background:#fff;border-right:1px solid #fff;border-bottom:1px solid #fff"></div>
<div class="a" style="left:315.79999999999995px;top:449.75px;width:60px;height:12.666666666666742px;background:#fff;border-right:1px solid #fff;border-bottom:1px solid #fff"></div>
<div class="a" style="left:375.79999999999995px;top:449.75px;width:60px;height:12.666666666666742px;background:#fff;border-right:1px solid #fff;border-bottom:1px solid #fff"></div>
<div class="a" style="left:435.79999999999995px;top:449.75px;width:60px;height:12.666666666666742px;background:#fff;border-right:1px solid #6a6a6a;border-bottom:1px solid #a8a8a8"></div>
<div class="t" style="left:82.5px;top:450.95000000000005px;font-size:9.4px;transform:scaleX(0.9126);transform-origin:0 0;color:#2e2e2e">Modified 12:18:07 PM 4/23/2024</div>
<div class="a" style="left:689px;top:43px;width:14px;height:414px;background:#f0f0f2"></div>
<svg class="a" style="left:690px;top:47px" width="10" height="6"><path d="M1,5 L5,1 L9,5" fill="none" stroke="#606060" stroke-width="1.2"/></svg>
<div class="a" style="left:689px;top:56px;width:12px;height:20px;background:#cdcdcd"></div>
</div>
<div class="a" style="left:425.6px;top:252.5px;width:428.4px;height:212.5px;background:#f0f0f2;box-shadow:0 0 3px rgba(0,0,0,.3)"></div>
<div class="a" style="left:425.6px;top:252.5px;width:428.4px;height:25.5px;background:#fff"></div>
<div class="t" style="left:431px;top:260px;font-size:10.9px;transform:scaleX(0.9165);transform-origin:0 0;color:#303030">Multiple Shots Listing</div>
<svg class="a" style="left:836px;top:260px;" width="10" height="10" viewBox="0 0 10 10"><path d="M0.5,0.5 L9.5,9.5 M9.5,0.5 L0.5,9.5" stroke="#303030" stroke-width="1"/></svg>
<div class="t" style="left:435px;top:287.5px;font-size:9.5px;transform:scaleX(0.9067);transform-origin:0 0;color:#303030">From Setup</div>
<div class="a" style="left:489px;top:286.5px;width:66px;height:19px;background:#ececec;border:1px solid #a8a8a8"></div>
<div class="t" style="left:489px;top:291.5px;width:63px;text-align:right;font-size:9px;color:#303030">6000</div>
<div class="a" style="left:434px;top:313px;width:11px;height:11px;border-radius:50%;border:1px solid #606060;background:#fff"></div>
<div class="a" style="left:436.5px;top:315.5px;width:6px;height:6px;border-radius:50%;background:#202020"></div>
<div class="t" style="left:447px;top:314px;font-size:9.5px;transform:scaleX(0.9435);transform-origin:0 0;color:#303030">Average All Shots Listed</div>
<div class="a" style="left:434px;top:329px;width:11px;height:11px;border-radius:50%;border:1px solid #909090;background:#fff"></div>
<div class="t" style="left:447px;top:330px;font-size:9.5px;transform:scaleX(0.9297);transform-origin:0 0;color:#303030">Choose the shots you want to average. Or you can select Single Shot</div>
<div class="t" style="left:458px;top:348px;font-size:8.6px;color:#404040">Num</div>
<div class="t" style="left:493px;top:348px;font-size:8.6px;color:#404040">Hz Ang</div>
<div class="t" style="left:577.5px;top:348px;font-size:8.6px;color:#404040">Dist</div>
<div class="t" style="left:621px;top:348px;font-size:8.6px;color:#404040">Vt.Ang</div>
<div class="t" style="left:696px;top:348px;font-size:8.6px;color:#404040">Tag. Ht</div>
<div class="t" style="left:753.5px;top:348px;font-size:8.6px;color:#404040">Description</div>
<div class="a" style="left:446.5px;top:361px;width:389px;height:54.5px;background:#fff;border:1px solid #a0a0a0"></div>
<div class="t" style="left:461px;top:363.5px;font-size:8.6px;color:#888">50</div>
<div class="t" style="left:489.8px;top:363.5px;font-size:8.6px;color:#888">15&#176;35'52"</div>
<div class="t" style="left:534.5px;top:363.5px;font-size:8.6px;color:#888">86.59</div>
<div class="t" style="left:573.7px;top:363.5px;font-size:8.6px;color:#888">272&#176;21'56"</div>
<div class="t" style="left:656.5px;top:363.5px;font-size:8.6px;color:#888">0.00</div>
<div class="t" style="left:700px;top:363.5px;font-size:8.6px;color:#888">TGT</div>
<div class="t" style="left:461px;top:374.0px;font-size:8.6px;color:#888">50</div>
<div class="t" style="left:487.7px;top:374.0px;font-size:8.6px;color:#888">192&#176;52'15"</div>
<div class="t" style="left:572.3px;top:374.0px;font-size:8.6px;color:#888">101.33</div>
<div class="t" style="left:615.3px;top:374.0px;font-size:8.6px;color:#888">87&#176;22'37"</div>
<div class="t" style="left:696px;top:374.0px;font-size:8.6px;color:#888">0.00</div>
<div class="t" style="left:740.4px;top:374.0px;font-size:8.6px;color:#888">TGT</div>
<div class="t" style="left:461px;top:385.0px;font-size:8.6px;color:#888">50</div>
<div class="t" style="left:490.5px;top:385.0px;font-size:8.6px;color:#888">12&#176;51'29"</div>
<div class="t" style="left:532.4px;top:385.0px;font-size:8.6px;color:#888">101.33</div>
<div class="t" style="left:574.3px;top:385.0px;font-size:8.6px;color:#888">272&#176;36'54"</div>
<div class="t" style="left:656.5px;top:385.0px;font-size:8.6px;color:#888">0.00</div>
<div class="t" style="left:700px;top:385.0px;font-size:8.6px;color:#888">TGT</div>
<div class="t" style="left:461px;top:395.5px;font-size:8.6px;color:#888">50</div>
<div class="t" style="left:487.7px;top:395.5px;font-size:8.6px;color:#888">192&#176;51'44"</div>
<div class="t" style="left:572.3px;top:395.5px;font-size:8.6px;color:#888">101.33</div>
<div class="t" style="left:615.3px;top:395.5px;font-size:8.6px;color:#888">87&#176;22'55"</div>
<div class="t" style="left:696px;top:395.5px;font-size:8.6px;color:#888">0.00</div>
<div class="t" style="left:740.4px;top:395.5px;font-size:8.6px;color:#888">TGT</div>
<div class="t" style="left:445.8px;top:419px;font-size:9.5px;transform:scaleX(0.8977);transform-origin:0 0;color:#303030">(Note: The First Shot in the list is the Last Shot to this point)</div>
<div class="a" style="left:534px;top:438px;width:65.5px;height:17px;background:#e1e1e1;border:1px solid #2a78d0"></div>
<div class="t" style="left:534px;top:442px;width:65.5px;text-align:center;font-size:9.5px;color:#202020">OK</div>
<div class="a" style="left:606px;top:438px;width:66px;height:17px;background:#d8d8d8;border:1px solid #c8c8c8"></div>
<div class="t" style="left:606px;top:442px;width:66px;text-align:center;font-size:9.5px;color:#a0a0a0">Cancel</div>
<div class="a" style="left:678px;top:438px;width:65.5px;height:17px;background:#e1e1e1;border:1px solid #b8b8b8"></div>
<div class="t" style="left:678px;top:442px;width:65.5px;text-align:center;font-size:9.5px;color:#202020">Help</div>
<svg class="a" style="left:442px;top:333px;" width="20" height="27" viewBox="0 0 20 27"><path d="M2,1.5 L1.5,22 L6.5,17 L11,25.5 L14.5,24 L10.5,15.5 L17,15 Z" fill="#fff" stroke="#111" stroke-width="1.7" stroke-linejoin="round"/></svg>
<div class="a" style="left:1141px;top:182.5px;width:99px;height:164.5px;background:#f0f0f2"></div>
<div class="a" style="left:1141px;top:182.5px;width:99px;height:24.5px;background:#fff"></div>
<div class="t" style="left:1148px;top:190.5px;font-size:10.5px;transform:scaleX(0.9454);transform-origin:0 0;color:#b8b8b8">Hot Toggles!</div>
<div class="a" style="left:1223px;top:188px;width:15px;height:16px;background:#e6e2e2"></div>
<div class="a" style="left:1144.5px;top:210.5px;width:10px;height:10px;background:#fff;border:1px solid #333"></div>
<svg class="a" style="left:1144.5px;top:210.5px;" width="10" height="10" viewBox="0 0 10 10"><path d="M2,5 L4.2,7.5 L8.5,2.5" fill="none" stroke="#333" stroke-width="1.1"/></svg>
<div class="t" style="left:1157px;top:211.5px;font-size:9.5px;transform:scaleX(0.9095);transform-origin:0 0;color:#202020">Point Protection</div>
<div class="a" style="left:1144.5px;top:222.5px;width:10px;height:10px;background:#fff;border:1px solid #333"></div>
<svg class="a" style="left:1144.5px;top:222.5px;" width="10" height="10" viewBox="0 0 10 10"><path d="M2,5 L4.2,7.5 L8.5,2.5" fill="none" stroke="#333" stroke-width="1.1"/></svg>
<div class="t" style="left:1157px;top:223.5px;font-size:9.5px;transform:scaleX(0.9083);transform-origin:0 0;color:#202020">Log File Output</div>
<div class="a" style="left:1144.5px;top:234.5px;width:10px;height:10px;background:#fff;border:1px solid #333"></div>
<div class="t" style="left:1157px;top:235.5px;font-size:9.5px;transform:scaleX(0.9087);transform-origin:0 0;color:#202020">Input scale</div>
<div class="a" style="left:1144.5px;top:246.5px;width:10px;height:10px;background:#fff;border:1px solid #333"></div>
<div class="t" style="left:1157px;top:247.5px;font-size:9.5px;transform:scaleX(0.9112);transform-origin:0 0;color:#202020">Output scale</div>
<div class="a" style="left:1144.5px;top:258.5px;width:10px;height:10px;background:#fff;border:1px solid #333"></div>
<svg class="a" style="left:1144.5px;top:258.5px;" width="10" height="10" viewBox="0 0 10 10"><path d="M2,5 L4.2,7.5 L8.5,2.5" fill="none" stroke="#333" stroke-width="1.1"/></svg>
<div class="t" style="left:1157px;top:259.5px;font-size:9.5px;transform:scaleX(0.9337);transform-origin:0 0;color:#202020">Draw lines/curves</div>
<div class="a" style="left:1144.5px;top:270.5px;width:10px;height:10px;background:#fff;border:1px solid #333"></div>
<div class="t" style="left:1157px;top:271.5px;font-size:9.5px;transform:scaleX(0.9316);transform-origin:0 0;color:#202020">Draw distances</div>
<div class="a" style="left:1144.5px;top:282.5px;width:10px;height:10px;background:#fff;border:1px solid #333"></div>
<div class="t" style="left:1157px;top:283.5px;font-size:9.5px;transform:scaleX(0.9306);transform-origin:0 0;color:#202020">Draw bearings</div>
<div class="t" style="left:1148px;top:298.5px;font-size:9.5px;transform:scaleX(0.8554);transform-origin:0 0;color:#202020">Next pt:</div>
<div class="a" style="left:1183px;top:295.5px;width:54px;height:15px;background:#fff;border:1px solid #b0b0b0"></div>
<div class="t" style="left:1185px;top:299px;font-size:9px;color:#202020">1</div>
<div class="t" style="left:1152px;top:316px;font-size:9.5px;transform:scaleX(0.8489);transform-origin:0 0;color:#202020">Low pt:</div>
<div class="a" style="left:1183px;top:313.5px;width:54px;height:14.5px;background:#f0f0f0;border:1px solid #c0c0c0"></div>
<div class="t" style="left:1185px;top:316.5px;font-size:9px;color:#606060">1</div>
<div class="a" style="left:1154px;top:332px;width:70px;height:11.5px;background:#e4e4e4;border:1px solid #b0b0b0"></div>
<div class="t" style="left:1173.75px;top:333px;font-size:9.5px;transform:scaleX(0.9199);transform-origin:0 0;color:#202020">Refresh</div>
<svg class="a" style="left:967px;top:432px" width="239" height="203" viewBox="0 0 239 203">
<defs>
<linearGradient id="wall" x1="0" y1="0" x2="1" y2="0.3"><stop offset="0" stop-color="#cbbdb0"/><stop offset="0.5" stop-color="#d6cabe"/><stop offset="1" stop-color="#e2d8cc"/></linearGradient>
<linearGradient id="wallv" x1="0" y1="0" x2="0.35" y2="1"><stop offset="0" stop-color="#c0b0a4" stop-opacity="0.35"/><stop offset="0.5" stop-color="#d8c4b4" stop-opacity="0"/><stop offset="1" stop-color="#e8ccb4" stop-opacity="0.55"/></linearGradient>
<linearGradient id="hair" x1="0" y1="0" x2="0" y2="1"><stop offset="0" stop-color="#4a3427"/><stop offset="0.6" stop-color="#5e4030"/><stop offset="1" stop-color="#8a5a38"/></linearGradient>
<radialGradient id="skin" cx="0.45" cy="0.5" r="0.62"><stop offset="0" stop-color="#f6dccb"/><stop offset="0.65" stop-color="#ecc8b4"/><stop offset="1" stop-color="#c89a82"/></radialGradient>
<linearGradient id="shirt" x1="0" y1="0" x2="1" y2="1"><stop offset="0" stop-color="#3042b8"/><stop offset="1" stop-color="#2838a8"/></linearGradient>
<linearGradient id="hair2" x1="0" y1="0" x2="0" y2="1"><stop offset="0" stop-color="#5a3e2e"/><stop offset="0.5" stop-color="#744c32"/><stop offset="1" stop-color="#9a683e"/></linearGradient>
<filter id="bl" x="-10%" y="-10%" width="120%" height="120%"><feGaussianBlur stdDeviation="1.2"/></filter>
<filter id="bl2"><feGaussianBlur stdDeviation="0.6"/></filter>
</defs>
<rect width="239" height="203" fill="url(#wall)"/><rect width="239" height="203" fill="url(#wallv)"/>
<path d="M175,20 C200,60 205,140 195,203 L239,203 L239,0 Z" fill="#ddd2c6" opacity="0.5" filter="url(#bl)"/>
<g filter="url(#bl)">
<path d="M111,10 C90,10 78,28 74,50 C70,75 68,100 64,118 C61,128 57,134 54,141 L90,132 L132,112 L138,150 L140,203 L171,203 C172,175 171,140 167,115 C163,90 160,60 152,38 C145,20 128,9 111,10 Z" fill="url(#hair)"/>
<path d="M90,112 C92,140 92,165 97,190 L104,195 L132,150 L132,110 Z" fill="#e2bca4"/><path d="M92,110 C100,125 120,125 131,108 L131,122 C120,135 100,135 92,124Z" fill="#c8987e"/>
<path d="M108,26 C94,27 84,38 81,58 C79,75 80,95 86,106 C92,115 100,120 110,120 C122,119 131,108 134,92 C137,75 137,55 132,42 C128,32 119,26 108,26Z" fill="url(#skin)"/>
<path d="M27,203 C28,185 33,165 45,152 C55,143 70,136 90,128 L96,150 L101,192 L118,170 L135,140 L150,137 C175,138 200,148 212,165 C219,178 222,190 224,203 Z" fill="url(#shirt)"/>
<path d="M90,128 L84,142 L101,192 L96,150 Z" fill="#1f2c90"/>
<path d="M128,105 C136,135 143,165 140,203 L171,203 C172,175 170,140 166,112 C162,90 158,70 150,50 L138,60 Z" fill="url(#hair2)"/>
</g>
<g filter="url(#bl2)">
<path d="M83,55 C88,52 95,52 100,54" stroke="#7a5040" stroke-width="2.2" fill="none"/>
<path d="M115,55 C121,52 128,53 132,56" stroke="#7a5040" stroke-width="2.2" fill="none"/>
<ellipse cx="92" cy="60.5" rx="5.5" ry="2.4" fill="#f0e4e0"/><circle cx="92.5" cy="60.5" r="2.2" fill="#5a4a48"/>
<ellipse cx="124" cy="62" rx="5.5" ry="2.4" fill="#f0e4e0"/><circle cx="123.5" cy="62" r="2.2" fill="#5a4a48"/>
<path d="M102,66 C101,72 100,77 104,79 C107,80 110,79 111,77" stroke="#c09078" stroke-width="1.2" fill="none"/>
<path d="M93,92 C100,90 110,90 117,92 C112,98 100,98 93,92Z" fill="#c8807a"/>
<path d="M96,92.5 C102,91.5 109,91.5 114,92.5 L113,94 C107,95 101,95 97,94Z" fill="#f4e8e0"/>
<text x="122" y="186" font-size="7" font-weight="bold" font-style="italic" fill="#e8e8f8" font-family="Liberation Sans">I M</text>
</g>
</svg>
<svg class="a" style="left:1186.5px;top:616.5px;" width="51" height="51" viewBox="0 0 51 51"><circle cx="25.5" cy="25.5" r="25.5" fill="#a4a4a8"/><circle cx="25.50" cy="5.50" r="1.1" fill="#5a5a5e"/><circle cx="39.64" cy="11.36" r="1.1" fill="#5a5a5e"/><circle cx="45.50" cy="25.50" r="1.1" fill="#5a5a5e"/><circle cx="39.64" cy="39.64" r="1.1" fill="#5a5a5e"/><circle cx="25.50" cy="45.50" r="1.1" fill="#5a5a5e"/><circle cx="11.36" cy="39.64" r="1.1" fill="#5a5a5e"/><circle cx="5.50" cy="25.50" r="1.1" fill="#5a5a5e"/><circle cx="11.36" cy="11.36" r="1.1" fill="#5a5a5e"/></svg>
</body></html>
